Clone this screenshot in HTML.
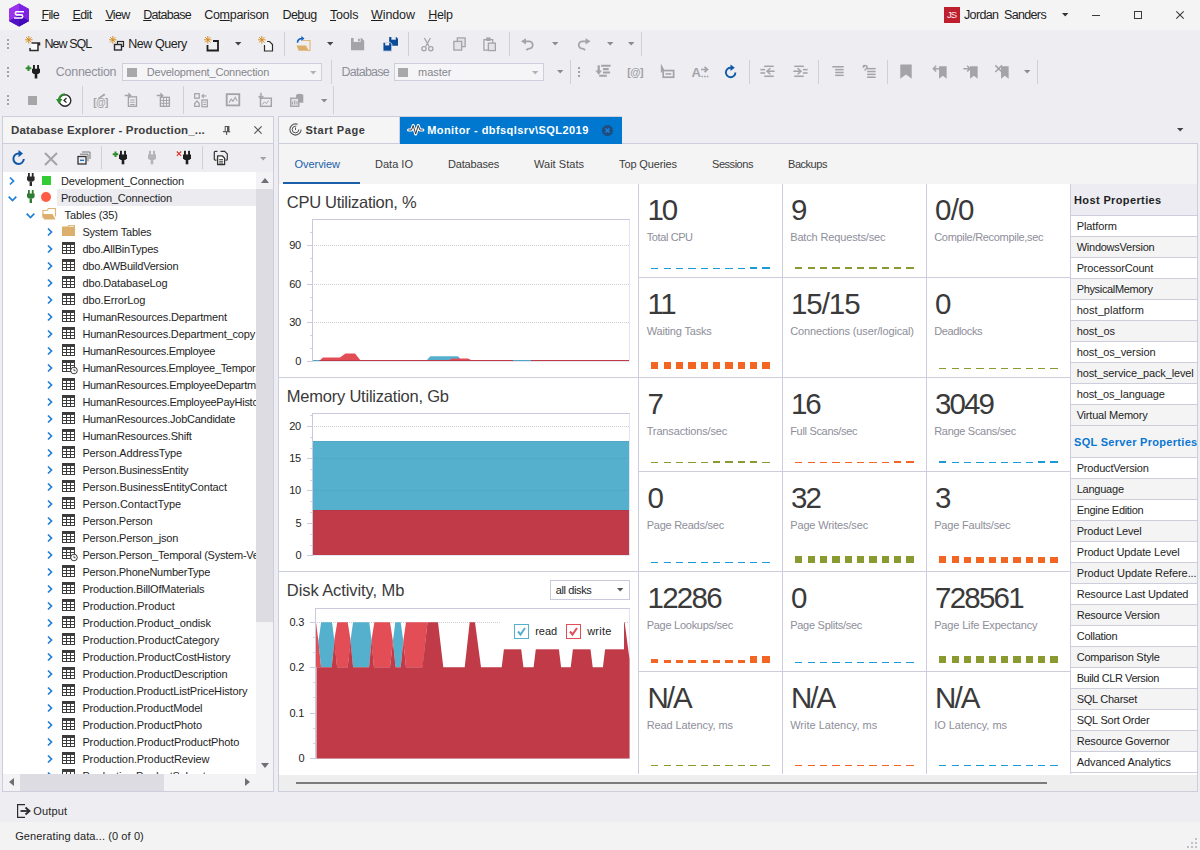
<!DOCTYPE html>
<html><head><meta charset="utf-8"><title>Monitor</title><style>*{box-sizing:border-box;margin:0;padding:0}
html,body{width:1200px;height:850px;overflow:hidden}
body{font-family:"Liberation Sans",sans-serif;font-size:12px;color:#1e1e1e;background:#eeeef2;position:relative}
.a{position:absolute}
.t{position:absolute;white-space:pre}
svg{overflow:visible}
u{text-decoration:underline;text-underline-offset:0.5px;text-decoration-thickness:1px}
</style></head><body>
<div class="a" style="left:0px;top:0px;width:1200px;height:30px;background:#f4f4f5;"></div>
<svg class="a" style="left:8px;top:3px" width="22" height="24" viewBox="0 0 22 24"><path d="M11 0.500L21 6v12L11 23.500 1 18V6z" fill="#7a1fe0"/><path d="M11 0.500L1 6v12l10-6z" fill="#9a33ee"/><path d="M11 0.500L21 6v12l-10-6z" fill="#7d22e2"/><path d="M1 18l10-6 10 6-10 5.500z" fill="#5210c4"/><path d="M11 12v11.500L21 18z" fill="#420bb8"/><path d="M16 8.800H8.600c-1.700 0-1.700 3.100 0 3.100h4.800c1.700 0 1.700 3.100 0 3.100H6" stroke="#fff" stroke-width="1.600" fill="none"/></svg>
<span class="t" style="left:41.4px;top:8px;font-size:12.5px;line-height:14px;height:14px;color:#1e1e1e;letter-spacing:-0.639px;"><u>F</u>ile</span>
<span class="t" style="left:72.4px;top:8px;font-size:12.5px;line-height:14px;height:14px;color:#1e1e1e;letter-spacing:-0.587px;"><u>E</u>dit</span>
<span class="t" style="left:105.4px;top:8px;font-size:12.5px;line-height:14px;height:14px;color:#1e1e1e;letter-spacing:-0.669px;"><u>V</u>iew</span>
<span class="t" style="left:143.2px;top:8px;font-size:12.5px;line-height:14px;height:14px;color:#1e1e1e;letter-spacing:-0.714px;"><u>D</u>atabase</span>
<span class="t" style="left:204.2px;top:8px;font-size:12.5px;line-height:14px;height:14px;color:#1e1e1e;letter-spacing:-0.279px;">Co<u>m</u>parison</span>
<span class="t" style="left:282.4px;top:8px;font-size:12.5px;line-height:14px;height:14px;color:#1e1e1e;letter-spacing:-0.509px;">De<u>b</u>ug</span>
<span class="t" style="left:330.0px;top:8px;font-size:12.5px;line-height:14px;height:14px;color:#1e1e1e;letter-spacing:-0.198px;"><u>T</u>ools</span>
<span class="t" style="left:371.0px;top:8px;font-size:12.5px;line-height:14px;height:14px;color:#1e1e1e;letter-spacing:-0.095px;"><u>W</u>indow</span>
<span class="t" style="left:428.2px;top:8px;font-size:12.5px;line-height:14px;height:14px;color:#1e1e1e;letter-spacing:-0.305px;"><u>H</u>elp</span>
<div class="a" style="left:944px;top:7px;width:16px;height:16px;background:#be1e2d;"></div>
<span class="t" style="left:947.0px;top:9px;font-size:9.5px;line-height:11px;height:11px;color:#fdeaea;letter-spacing:-0.897px;">JS</span>
<span class="t" style="left:964.0px;top:8px;font-size:12.5px;line-height:14px;height:14px;color:#1e1e1e;letter-spacing:-0.649px;">Jordan  Sanders</span>
<svg class="a" style="left:1062.3px;top:12.8px" width="6.4" height="3.4" viewBox="0 0 6.4 3.4"><path d="M0 0h6.400L3.200 3.400z" fill="#333"/></svg>
<div class="a" style="left:1092px;top:15px;width:8px;height:1px;background:#3a3a3a;"></div>
<div class="a" style="left:1134px;top:11px;width:8px;height:8px;border:1px solid #3a3a3a"></div>
<svg class="a" style="left:1176px;top:11px" width="8" height="8" viewBox="0 0 8 8"><path d="M0.300 0.300l7.400 7.400M7.700 0.300l-7.400 7.400" stroke="#3a3a3a" stroke-width="1.100"/></svg>
<div class="a" style="left:0px;top:30px;width:1200px;height:87px;background:#eeeef2;"></div>
<div class="a" style="left:7px;top:39px;width:2px;height:2px;background:#a2a2aa;"></div><div class="a" style="left:7px;top:43px;width:2px;height:2px;background:#a2a2aa;"></div><div class="a" style="left:7px;top:47px;width:2px;height:2px;background:#a2a2aa;"></div>
<svg class="a" style="left:25px;top:36px" width="16" height="16" viewBox="0 0 16 16"><g transform="translate(0,0)"><path d="M3.800 0v7.600M0 3.800h7.600M1.100 1.100l5.400 5.400M6.500 1.100L1.100 6.500" stroke="#d68a1e" stroke-width="0.95" fill="none"/></g><path d="M6 6.500h8.500v2.500h-1.500v5.500H5v-2.500h1.500z" fill="#fff"/><path d="M6.500 7h8v2.500M13 7v7.500H5v-2.500" stroke="#2b2b2b" stroke-width="1.500" fill="none"/></svg>
<span class="t" style="left:44.5px;top:37px;font-size:12.5px;line-height:14px;height:14px;color:#1e1e1e;letter-spacing:-0.957px;">New SQL</span>
<svg class="a" style="left:109px;top:36px" width="16" height="16" viewBox="0 0 16 16"><path d="M3.800 0v7.600M0 3.800h7.600M1.100 1.100l5.400 5.400M6.500 1.100L1.100 6.500" stroke="#d68a1e" stroke-width="0.95" fill="none"/><rect x="8.5" y="5.5" width="6" height="5" fill="none" stroke="#2b2b2b" stroke-width="1.2"/><rect x="5.5" y="8.5" width="7" height="5.5" fill="#eeeef2" stroke="#2b2b2b" stroke-width="1.4"/></svg>
<span class="t" style="left:128.3px;top:37px;font-size:12.5px;line-height:14px;height:14px;color:#1e1e1e;letter-spacing:-0.459px;">New Query</span>
<svg class="a" style="left:204px;top:36px" width="16" height="16" viewBox="0 0 16 16"><path d="M3.800 0v7.600M0 3.800h7.600M1.100 1.100l5.400 5.400M6.500 1.100L1.100 6.500" stroke="#d68a1e" stroke-width="0.95" fill="none"/><path d="M9 5h5v9.5H3.5V9" stroke="#1e1e1e" stroke-width="1.8" fill="none"/></svg>
<svg class="a" style="left:235.3px;top:41.9px" width="6.4" height="3.4" viewBox="0 0 6.4 3.4"><path d="M0 0h6.400L3.200 3.400z" fill="#444"/></svg>
<svg class="a" style="left:258px;top:36px" width="16" height="16" viewBox="0 0 16 16"><path d="M3.800 0v7.600M0 3.800h7.600M1.100 1.100l5.400 5.400M6.500 1.100L1.100 6.500" stroke="#d68a1e" stroke-width="0.95" fill="none"/><path d="M9 5.5h2.5l3 3v6.5H6.5V9" stroke="#2b2b2b" stroke-width="1.2" fill="#f8f8f8"/></svg>
<div class="a" style="left:284px;top:32px;width:1px;height:24px;background:#cfd0da;"></div>
<svg class="a" style="left:296px;top:36px" width="16" height="16" viewBox="0 0 16 16"><path d="M6.500 4.500h7.500v10h-3" stroke="#e3b877" stroke-width="1.200" fill="none"/><path d="M0.500 9.500h9.500l2.700 5.200H2.700z" fill="#dcae69"/><path d="M1.500 6.800c0-3.200 2-4.300 5-4.300" stroke="#1565c0" stroke-width="1.600" fill="none"/><path d="M5.300 0l3.200 2.500-3.200 2.500z" fill="#1565c0"/></svg>
<svg class="a" style="left:327.3px;top:41.9px" width="6.4" height="3.4" viewBox="0 0 6.4 3.4"><path d="M0 0h6.400L3.200 3.400z" fill="#444"/></svg>
<svg class="a" style="left:351px;top:38px" width="13.2" height="12.3" viewBox="0 0 15 14"><path d="M0 0h12l3 3v11H0z" fill="#a4a4a8"/><rect x="3" y="0" width="8" height="4.5" fill="#eeeef2"/><rect x="8" y="0.8" width="2" height="3" fill="#a4a4a8"/></svg>
<svg class="a" style="left:382.5px;top:36.7px" width="15" height="14.2" viewBox="0 0 17 16"><path d="M7 0h8l2 2v8H7z" fill="#0c4a9a"/><rect x="9.5" y="0" width="5" height="3" fill="#eeeef2"/><path d="M0 6h8l2 2v8H0z" fill="#0c4a9a" stroke="#eeeef2" stroke-width="1"/><rect x="2.5" y="6.5" width="4.5" height="3" fill="#eeeef2"/></svg>
<div class="a" style="left:408px;top:32px;width:1px;height:24px;background:#cfd0da;"></div>
<svg class="a" style="left:420.5px;top:37.5px" width="12.8" height="13.7" viewBox="0 0 15 16"><path d="M4 0l5.5 10M11 0L5.5 10" stroke="#a4a4a8" stroke-width="1.5" fill="none"/><circle cx="3.5" cy="12.5" r="2.5" fill="none" stroke="#a4a4a8" stroke-width="1.5"/><circle cx="11.5" cy="12.5" r="2.5" fill="none" stroke="#a4a4a8" stroke-width="1.5"/></svg>
<svg class="a" style="left:452.5px;top:37px" width="13" height="14" viewBox="0 0 15 16"><rect x="5" y="1" width="9" height="10" fill="#e4e4e8" stroke="#a4a4a8" stroke-width="1.5"/><rect x="1" y="5" width="9" height="10" fill="#e4e4e8" stroke="#a4a4a8" stroke-width="1.5"/></svg>
<svg class="a" style="left:483.2px;top:37px" width="13.3" height="14" viewBox="0 0 15 16"><rect x="1" y="3" width="10" height="12" fill="none" stroke="#a4a4a8" stroke-width="1.5"/><rect x="3.5" y="0.5" width="5" height="4" fill="#a4a4a8"/><rect x="6" y="7" width="8" height="8.5" fill="#e4e4e8" stroke="#a4a4a8" stroke-width="1.5"/></svg>
<div class="a" style="left:509px;top:32px;width:1px;height:24px;background:#cfd0da;"></div>
<svg class="a" style="left:521px;top:37.5px" width="13.5" height="13" viewBox="0 0 15 14"><path d="M3 3.5h6a4 4 0 0 1 0 8c-1.5 0-2 .5-3 2" stroke="#a4a4a8" stroke-width="2" fill="none"/><path d="M0 3.5L5.5 0v7z" fill="#a4a4a8"/></svg>
<svg class="a" style="left:552.3px;top:41.9px" width="6.4" height="3.4" viewBox="0 0 6.4 3.4"><path d="M0 0h6.400L3.200 3.400z" fill="#8a8a90"/></svg>
<svg class="a" style="left:576.5px;top:37.5px" width="13.5" height="13" viewBox="0 0 15 14"><path d="M12 3.5H6a4 4 0 0 0 0 8c1.5 0 2 .5 3 2" stroke="#a4a4a8" stroke-width="2" fill="none"/><path d="M15 3.5L9.5 0v7z" fill="#a4a4a8"/></svg>
<svg class="a" style="left:607.3px;top:41.9px" width="6.4" height="3.4" viewBox="0 0 6.4 3.4"><path d="M0 0h6.400L3.200 3.400z" fill="#8a8a90"/></svg>
<svg class="a" style="left:628.3px;top:41.9px" width="6.4" height="3.4" viewBox="0 0 6.4 3.4"><path d="M0 0h6.400L3.200 3.400z" fill="#8a8a90"/></svg>
<div class="a" style="left:641px;top:32px;width:1px;height:24px;background:#cfd0da;"></div>
<div class="a" style="left:7px;top:67px;width:2px;height:2px;background:#a2a2aa;"></div><div class="a" style="left:7px;top:71px;width:2px;height:2px;background:#a2a2aa;"></div><div class="a" style="left:7px;top:75px;width:2px;height:2px;background:#a2a2aa;"></div>
<svg class="a" style="left:25px;top:64px" width="16" height="16" viewBox="0 0 16 16"><path d="M3.500 1.500v5.600M0.700 4.300h5.600" stroke="#2e8b2e" stroke-width="2"/><g transform="translate(7,1) scale(1.0)"><rect x="1" y="0" width="1.9" height="4.2" fill="#1e1e1e"/><rect x="5.1" y="0" width="1.9" height="4.2" fill="#1e1e1e"/><path d="M0 3.800h8v3.600l-1.700 1.700h-4.600L0 7.400z" fill="#1e1e1e"/><rect x="2.700" y="8.800" width="2.600" height="4.700" fill="#1e1e1e"/></g></svg>
<span class="t" style="left:55.8px;top:65px;font-size:12.5px;line-height:14px;height:14px;color:#8e8e9a;letter-spacing:-0.275px;">Connection</span>
<div class="a" style="left:122px;top:63px;width:200px;height:18px;background:#f5f5f7;border:1px solid #cdcfdc"></div>
<div class="a" style="left:127px;top:68px;width:10px;height:9px;background:#a8a8a8;"></div>
<span class="t" style="left:146.7px;top:66px;font-size:11px;line-height:12px;height:12px;color:#86868c;letter-spacing:-0.186px;">Development_Connection</span>
<svg class="a" style="left:310.1px;top:70.6px" width="6.4" height="3.4" viewBox="0 0 6.4 3.4"><path d="M0 0h6.400L3.200 3.400z" fill="#b2b2b6"/></svg>
<div class="a" style="left:331px;top:60px;width:1px;height:24px;background:#cfd0da;"></div>
<span class="t" style="left:341.5px;top:65px;font-size:12.5px;line-height:14px;height:14px;color:#8e8e9a;letter-spacing:-0.752px;">Database</span>
<div class="a" style="left:394px;top:63px;width:150px;height:18px;background:#f5f5f7;border:1px solid #cdcfdc"></div>
<div class="a" style="left:398px;top:68px;width:10px;height:9px;background:#a8a8a8;"></div>
<span class="t" style="left:418.0px;top:66px;font-size:11px;line-height:12px;height:12px;color:#86868c;letter-spacing:-0.021px;">master</span>
<svg class="a" style="left:532.0999999999999px;top:70.6px" width="6.4" height="3.4" viewBox="0 0 6.4 3.4"><path d="M0 0h6.400L3.200 3.400z" fill="#b2b2b6"/></svg>
<svg class="a" style="left:557.3px;top:70.3px" width="6.4" height="3.4" viewBox="0 0 6.4 3.4"><path d="M0 0h6.400L3.200 3.400z" fill="#8a8a90"/></svg>
<div class="a" style="left:570px;top:60px;width:1px;height:24px;background:#cfd0da;"></div>
<div class="a" style="left:578px;top:67px;width:2px;height:2px;background:#a2a2aa;"></div><div class="a" style="left:578px;top:71px;width:2px;height:2px;background:#a2a2aa;"></div><div class="a" style="left:578px;top:75px;width:2px;height:2px;background:#a2a2aa;"></div>
<svg class="a" style="left:594.5px;top:64px" width="16" height="16" viewBox="0 0 16 16"><g transform="translate(8,8) scale(0.95) translate(-8,-8)"><path d="M6 1.5h10M8 5h6M8 8.500h7.500M4 12h8" stroke="#a4a4a8" stroke-width="2.200"/><path d="M3.500 1v7" stroke="#a4a4a8" stroke-width="2.400"/><path d="M0 6.500h7L3.500 11z" fill="#a4a4a8"/></g></svg>
<span class="t" style="left:627.3px;top:66px;font-size:10.5px;line-height:12px;height:12px;color:#a0a0a4;font-weight:700;letter-spacing:-0.578px;">[@]</span>
<svg class="a" style="left:658.5px;top:64px" width="16" height="16" viewBox="0 0 16 16"><g transform="translate(8,8) scale(0.95) translate(-8,-8)"><path d="M1.500 -1v10l2.800-2.500L7 9z" fill="#a4a4a8"/><rect x="4" y="6.500" width="11" height="7" fill="#eeeef2" stroke="#a4a4a8" stroke-width="1.800"/><path d="M6.500 10h6" stroke="#a4a4a8" stroke-width="1.600"/></g></svg>
<span class="t" style="left:691.5px;top:65px;font-size:13px;line-height:15px;height:15px;color:#a4a4a8;font-weight:700;letter-spacing:-0.791px;">A</span>
<svg class="a" style="left:700.5px;top:66px" width="8" height="12" viewBox="0 0 8 12"><path d="M0 3.500h5.500M3.500 0.800L6.500 3.500 3.500 6.200" stroke="#a4a4a8" stroke-width="1.700" fill="none"/><path d="M0.500 10.500h7" stroke="#a4a4a8" stroke-width="1.600" stroke-dasharray="1.600 1"/></svg>
<svg class="a" style="left:723px;top:64px" width="16" height="16" viewBox="0 0 16 16"><g transform="translate(8,8) scale(0.95) translate(-8,-8)"><path d="M12.6 8.5a5 5 0 1 1-4.6-5" stroke="#0f58a8" stroke-width="2" fill="none"/><path d="M7.5 0l4.5 3.5-4.5 3.5z" fill="#0f58a8"/></g></svg>
<div class="a" style="left:749px;top:60px;width:1px;height:24px;background:#cfd0da;"></div>
<svg class="a" style="left:760px;top:64px" width="16" height="16" viewBox="0 0 16 16"><g transform="translate(8,8) scale(0.95) translate(-8,-8)"><path d="M4 2H14" stroke="#a4a4a8" stroke-width="1.6"/><path d="M4 12.5H14" stroke="#a4a4a8" stroke-width="1.6"/><path d="M0 5.5H5" stroke="#a4a4a8" stroke-width="1.6"/><path d="M0 9H5" stroke="#a4a4a8" stroke-width="1.6"/><path d="M15 7.2H8" stroke="#a4a4a8" stroke-width="1.6"/><path d="M10.5 4L7 7.2l3.5 3.2" stroke="#a4a4a8" stroke-width="1.6" fill="none"/></g></svg>
<svg class="a" style="left:791.5px;top:64px" width="16" height="16" viewBox="0 0 16 16"><g transform="translate(8,8) scale(0.95) translate(-8,-8)"><path d="M2 2H12" stroke="#a4a4a8" stroke-width="1.6"/><path d="M2 12.5H12" stroke="#a4a4a8" stroke-width="1.6"/><path d="M11 5.5H16" stroke="#a4a4a8" stroke-width="1.6"/><path d="M11 9H16" stroke="#a4a4a8" stroke-width="1.6"/><path d="M1 7.2h7" stroke="#a4a4a8" stroke-width="1.6"/><path d="M5.5 4L9 7.2 5.5 10.4" stroke="#a4a4a8" stroke-width="1.6" fill="none"/></g></svg>
<div class="a" style="left:818px;top:60px;width:1px;height:24px;background:#cfd0da;"></div>
<svg class="a" style="left:829.5px;top:64px" width="16" height="16" viewBox="0 0 16 16"><g transform="translate(8,8) scale(0.95) translate(-8,-8)"><path d="M5 2.5H14" stroke="#a4a4a8" stroke-width="1.6"/><path d="M5 5.5H14" stroke="#a4a4a8" stroke-width="1.6"/><path d="M5 8.5H14" stroke="#a4a4a8" stroke-width="1.6"/><path d="M5 11.5H14" stroke="#a4a4a8" stroke-width="1.6"/><path d="M2 2.5h3" stroke="#a4a4a8" stroke-width="1.6"/></g></svg>
<svg class="a" style="left:860.5px;top:64px" width="16" height="16" viewBox="0 0 16 16"><g transform="translate(8,8) scale(0.95) translate(-8,-8)"><path d="M6 4.5H15" stroke="#a4a4a8" stroke-width="1.6"/><path d="M6 7.5H15" stroke="#a4a4a8" stroke-width="1.6"/><path d="M6 10.5H15" stroke="#a4a4a8" stroke-width="1.6"/><path d="M6 13.5H15" stroke="#a4a4a8" stroke-width="1.6"/><path d="M2 3.5c0-3 4-3 4-.5 0 1.5-2 2-2.5 3.5" stroke="#a4a4a8" stroke-width="1.6" fill="none"/><path d="M1 1l3 0-1 2z" fill="#a4a4a8"/></g></svg>
<div class="a" style="left:887px;top:60px;width:1px;height:24px;background:#cfd0da;"></div>
<svg class="a" style="left:897.5px;top:64px" width="16" height="16" viewBox="0 0 16 16"><g transform="translate(8,8) scale(0.95) translate(-8,-8)"><path d="M2 0h12v15l-6-4.5L2 15z" fill="#a4a4a8"/></g></svg>
<svg class="a" style="left:931.5px;top:64px" width="16" height="16" viewBox="0 0 16 16"><g transform="translate(8,8) scale(0.95) translate(-8,-8)"><path d="M7 2h8v13l-4-3-4 3z" fill="#a4a4a8"/><path d="M8 4.5H1M4 1.5L1 4.5l3 3" stroke="#a4a4a8" stroke-width="1.6" fill="none"/></g></svg>
<svg class="a" style="left:962.5px;top:64px" width="16" height="16" viewBox="0 0 16 16"><g transform="translate(8,8) scale(0.95) translate(-8,-8)"><path d="M7 2h8v13l-4-3-4 3z" fill="#a4a4a8"/><path d="M0 4.5h7M4 1.5l3 3-3 3" stroke="#a4a4a8" stroke-width="1.6" fill="none"/></g></svg>
<svg class="a" style="left:994px;top:64px" width="16" height="16" viewBox="0 0 16 16"><g transform="translate(8,8) scale(0.95) translate(-8,-8)"><path d="M7 2h8v13l-4-3-4 3z" fill="#a4a4a8"/><path d="M1 1l7 7M8 1L1 8" stroke="#a4a4a8" stroke-width="1.6" fill="none"/></g></svg>
<svg class="a" style="left:1024.3px;top:70.3px" width="6.4" height="3.4" viewBox="0 0 6.4 3.4"><path d="M0 0h6.400L3.200 3.400z" fill="#8a8a90"/></svg>
<div class="a" style="left:1037px;top:60px;width:1px;height:24px;background:#cfd0da;"></div>
<div class="a" style="left:7px;top:95px;width:2px;height:2px;background:#a2a2aa;"></div><div class="a" style="left:7px;top:99px;width:2px;height:2px;background:#a2a2aa;"></div><div class="a" style="left:7px;top:103px;width:2px;height:2px;background:#a2a2aa;"></div>
<div class="a" style="left:28px;top:96px;width:9px;height:9px;background:#a6a6a8;"></div>
<svg class="a" style="left:56px;top:92px" width="16" height="16" viewBox="0 0 16 16"><circle cx="9" cy="8.5" r="5.8" fill="#fff" stroke="#2a2a2a" stroke-width="1.4"/><path d="M10.5 6L8 8.5l2.5 2" stroke="#2a2a2a" stroke-width="1.3" fill="none"/><path d="M3 8.5A6 6 0 0 1 9 2.2" stroke="#2e8b2e" stroke-width="2" fill="none"/><path d="M0 7h6.5L3 12z" fill="#2e8b2e"/></svg>
<div class="a" style="left:82px;top:86px;width:1px;height:28px;background:#cfd0da;"></div>
<span class="t" style="left:93.3px;top:97px;font-size:10px;line-height:11px;height:11px;color:#a4a4a8;font-weight:700;letter-spacing:-0.641px;">[@]</span>
<svg class="a" style="left:97px;top:92.5px" width="9" height="6" viewBox="0 0 9 6"><path d="M0.500 5.500L7 0.500l1.500 1.500L2 6z" fill="#a4a4a8"/></svg>
<svg class="a" style="left:124px;top:92px" width="16" height="16" viewBox="0 0 16 16"><g transform="translate(8,8) scale(0.9) translate(-8,-8)"><rect x="4" y="4.5" width="9" height="10.5" fill="none" stroke="#a4a4a8" stroke-width="1.5"/><path d="M6 8H11" stroke="#a4a4a8" stroke-width="1.1"/><path d="M6 10.5H11" stroke="#a4a4a8" stroke-width="1.1"/><path d="M6 13H11" stroke="#a4a4a8" stroke-width="1.1"/><path d="M0 3h6M4 0.5L6.5 3 4 5.5" stroke="#a4a4a8" stroke-width="1.6" fill="none"/></g></svg>
<svg class="a" style="left:156px;top:92px" width="16" height="16" viewBox="0 0 16 16"><g transform="translate(8,8) scale(0.9) translate(-8,-8)"><rect x="4" y="5" width="10" height="10" fill="none" stroke="#a4a4a8" stroke-width="1.5"/><path d="M4 8.5h10M4 11.7h10M7.5 5v10M10.8 5v10" stroke="#a4a4a8" stroke-width="1.1"/><path d="M0 3h6M4 0.5L6.5 3 4 5.5" stroke="#a4a4a8" stroke-width="1.6" fill="none"/></g></svg>
<div class="a" style="left:183px;top:86px;width:1px;height:28px;background:#cfd0da;"></div>
<svg class="a" style="left:193px;top:92px" width="16" height="16" viewBox="0 0 16 16"><g transform="translate(8,8) scale(0.9) translate(-8,-8)"><rect x="1" y="1" width="5" height="5" fill="none" stroke="#a4a4a8" stroke-width="1.4"/><path d="M9 3.5h5" stroke="#a4a4a8" stroke-width="1.4"/><path d="M11 1.5l-2 2 2 2" stroke="#a4a4a8" stroke-width="1.2" fill="none"/><path d="M1 15v-3l2.5-3 2.5 3v3z" fill="none" stroke="#a4a4a8" stroke-width="1.4"/><rect x="9" y="8" width="6" height="7.5" fill="none" stroke="#a4a4a8" stroke-width="1.4"/><path d="M10.5 10.5h3M10.5 13h3" stroke="#a4a4a8" stroke-width="1.1"/></g></svg>
<svg class="a" style="left:225px;top:92px" width="16" height="16" viewBox="0 0 16 16"><g transform="translate(8,8) scale(0.9) translate(-8,-8)"><rect x="1" y="1.5" width="14" height="12.5" fill="none" stroke="#a4a4a8" stroke-width="2"/><path d="M3.5 11l2.5-4 2 2.5 2.5-4.5 2 4" stroke="#a4a4a8" stroke-width="1.2" fill="none"/></g></svg>
<svg class="a" style="left:257px;top:92px" width="16" height="16" viewBox="0 0 16 16"><g transform="translate(8,8) scale(0.9) translate(-8,-8)"><rect x="3" y="6" width="12" height="9" fill="none" stroke="#a4a4a8" stroke-width="1.6"/><path d="M5 13l2.5-3 2 2 2.5-3.5" stroke="#a4a4a8" stroke-width="1.1" fill="none"/><path d="M3.5 0v6M1 3.5l2.5 3 2.5-3" stroke="#a4a4a8" stroke-width="1.6" fill="none"/></g></svg>
<svg class="a" style="left:289px;top:92px" width="16" height="16" viewBox="0 0 16 16"><g transform="translate(8,8) scale(0.9) translate(-8,-8)"><ellipse cx="11" cy="3" rx="4" ry="2" fill="#a4a4a8"/><path d="M7 3v8h8V3" fill="#a4a4a8"/><rect x="1" y="6" width="9" height="9" fill="#e2e2e6" stroke="#a4a4a8" stroke-width="1.5"/><path d="M3 13V10M5.5 13V8.5M8 13v-3.5" stroke="#a4a4a8" stroke-width="1.2"/></g></svg>
<svg class="a" style="left:320.8px;top:98.7px" width="6.4" height="3.4" viewBox="0 0 6.4 3.4"><path d="M0 0h6.400L3.200 3.400z" fill="#8a8a90"/></svg>
<div class="a" style="left:333px;top:86px;width:1px;height:28px;background:#cfd0da;"></div>
<div class="a" style="left:2px;top:116px;width:272px;height:676px;background:#fff;border:1px solid #cccedb"></div>
<div class="a" style="left:3px;top:117px;width:270px;height:26px;background:#f5f5f5;"></div>
<div class="a" style="left:3px;top:143px;width:270px;height:1px;background:#cccedb;"></div>
<span class="t" style="left:11.0px;top:124px;font-size:11.5px;line-height:12px;height:12px;color:#3d3d3d;font-weight:700;letter-spacing:0.180px;">Database Explorer - Production_...</span>
<svg class="a" style="left:223px;top:126px" width="8" height="9" viewBox="0 0 8 9"><path d="M1.8 0.5h4.4M2.2 0.5v5M5.8 0.5v5" stroke="#555" stroke-width="1" fill="none"/><rect x="4" y="0.5" width="2.2" height="5" fill="#555"/><path d="M0 5.7h7.2" stroke="#555" stroke-width="1.2"/><path d="M3.6 6v3" stroke="#555" stroke-width="1.1"/></svg>
<svg class="a" style="left:254px;top:126px" width="8" height="8" viewBox="0 0 8 8"><path d="M0.4 0.4l7.2 7.2M7.600 0.4L0.4 7.6" stroke="#555" stroke-width="1.2"/></svg>
<div class="a" style="left:3px;top:144px;width:270px;height:28px;background:#eeeef2;"></div>
<svg class="a" style="left:11px;top:150px" width="16" height="16" viewBox="0 0 16 16"><path d="M12.8 9a5.2 5.2 0 1 1-4.8-5.4" stroke="#0f58a8" stroke-width="2" fill="none"/><path d="M7.5 0l4.5 3.6-4.5 3.6z" fill="#0f58a8"/></svg>
<svg class="a" style="left:44px;top:151.5px" width="14" height="14" viewBox="0 0 14 14"><path d="M1 1l12 12M13 1L1 13" stroke="#a4a4a8" stroke-width="2"/></svg>
<svg class="a" style="left:77px;top:151px" width="14" height="14" viewBox="0 0 14 14"><path d="M5 1h8v7M3 3.2h8v7" stroke="#666" stroke-width="0.9" fill="none"/><rect x="1" y="5.5" width="8" height="7.5" fill="#eeeef2" stroke="#333" stroke-width="1.3"/><path d="M3 9.3h4" stroke="#1e6fc4" stroke-width="1.4"/></svg>
<div class="a" style="left:101px;top:146px;width:1px;height:23px;background:#cfd0da;"></div>
<svg class="a" style="left:112px;top:150px" width="16" height="16" viewBox="0 0 16 16"><path d="M3.5 1.5v5.6M0.7 4.3h5.6" stroke="#2e8b2e" stroke-width="2"/><g transform="translate(7,0.8) scale(1.0)"><rect x="1" y="0" width="1.9" height="4.2" fill="#1e1e1e"/><rect x="5.1" y="0" width="1.9" height="4.2" fill="#1e1e1e"/><path d="M0 3.8h8v3.6l-1.7 1.7h-4.6L0 7.4z" fill="#1e1e1e"/><rect x="2.7" y="8.8" width="2.6" height="4.7" fill="#1e1e1e"/></g></svg>
<svg class="a" style="left:144px;top:150px" width="16" height="16" viewBox="0 0 16 16"><g transform="translate(4,0.8) scale(1.0)"><rect x="1" y="0" width="1.9" height="4.2" fill="#b4b4b8"/><rect x="5.1" y="0" width="1.9" height="4.2" fill="#b4b4b8"/><path d="M0 3.8h8v3.6l-1.7 1.7h-4.6L0 7.4z" fill="#b4b4b8"/><rect x="2.7" y="8.8" width="2.6" height="4.7" fill="#b4b4b8"/></g></svg>
<svg class="a" style="left:176px;top:150px" width="16" height="16" viewBox="0 0 16 16"><path d="M0.8 1.5l4.4 4.4M5.2 1.5L0.8 5.9" stroke="#d43a2f" stroke-width="1.2"/><g transform="translate(7,0.8) scale(1.0)"><rect x="1" y="0" width="1.9" height="4.2" fill="#1e1e1e"/><rect x="5.1" y="0" width="1.9" height="4.2" fill="#1e1e1e"/><path d="M0 3.8h8v3.6l-1.7 1.7h-4.6L0 7.4z" fill="#1e1e1e"/><rect x="2.7" y="8.8" width="2.6" height="4.7" fill="#1e1e1e"/></g></svg>
<div class="a" style="left:202px;top:146px;width:1px;height:23px;background:#cfd0da;"></div>
<svg class="a" style="left:213px;top:150px" width="16" height="16" viewBox="0 0 16 16"><path d="M3.5 10.2H2.3c-.6 0-1-.4-1-1V2.3c0-.6.4-1 1-1H4.5M7.5 1.3h4.200l2.600 2.600v5.300c0 .6-.4 1-1 1h-.8" stroke="#333" stroke-width="1.2" fill="none"/><path d="M4.6 5.800h4.600l2.400 2.400v6.300H4.600z" fill="#fff" stroke="#333" stroke-width="1.3" stroke-linejoin="round"/><path d="M6.200 9.600h3.800M6.200 11.300h3.800M6.200 13h3.800" stroke="#333" stroke-width="0.9"/></svg>
<svg class="a" style="left:259.8px;top:156.8px" width="6.4" height="3.4" viewBox="0 0 6.4 3.4"><path d="M0 0h6.400L3.200 3.400z" fill="#a0a0a6"/></svg>
<div class="a" style="left:3px;top:172px;width:253px;height:602px;background:#fff;"></div>
<div class="a" style="left:57px;top:189px;width:199px;height:17px;background:#ebebf0;"></div>
<div class="a" style="left:3px;top:172px;width:253px;height:602px;overflow:hidden"><svg class="a" style="left:5.5px;top:5px" width="6" height="8" viewBox="0 0 6 8"><path d="M1 0.5L4.5 4 1 7.5" stroke="#1e7fd8" stroke-width="1.7" fill="none"/></svg><svg class="a" style="left:23.5px;top:1.4000000000000004px" width="8" height="13" viewBox="0 0 8 13"><rect x="1" y="0" width="1.8" height="4" fill="#2a2a2a"/><rect x="4.8" y="0" width="1.8" height="4" fill="#2a2a2a"/><path d="M0 3.6h7.6v3.4l-1.6 1.600h-4.400L0 7z" fill="#2a2a2a"/><rect x="2.6" y="8.4" width="2.4" height="4.6" fill="#2a2a2a"/></svg><div class="a" style="left:39px;top:4px;width:9px;height:9px;background:#33cc33;"></div><span class="t" style="left:57.9px;top:3px;font-size:11px;line-height:12px;height:12px;color:#1e1e1e;letter-spacing:-0.163px;">Development_Connection</span><svg class="a" style="left:4.5px;top:23.5px" width="9" height="6" viewBox="0 0 9 6"><path d="M0.7 0.700L4.5 4.5 8.3 0.7" stroke="#1e7fd8" stroke-width="1.7" fill="none"/></svg><svg class="a" style="left:23.5px;top:18.4px" width="8" height="13" viewBox="0 0 8 13"><rect x="1" y="0" width="1.8" height="4" fill="#2e7d32"/><rect x="4.8" y="0" width="1.8" height="4" fill="#2e7d32"/><path d="M0 3.6h7.6v3.4l-1.6 1.600h-4.400L0 7z" fill="#2e7d32"/><rect x="2.6" y="8.4" width="2.4" height="4.6" fill="#2e7d32"/></svg><div class="a" style="left:38.1px;top:19.8px;width:10.4px;height:10.4px;background:#ff5c45;border-radius:50%"></div><span class="t" style="left:57.9px;top:20px;font-size:11px;line-height:12px;height:12px;color:#1e1e1e;letter-spacing:-0.160px;">Production_Connection</span><svg class="a" style="left:23px;top:40.5px" width="9" height="6" viewBox="0 0 9 6"><path d="M0.7 0.700L4.5 4.5 8.3 0.7" stroke="#1e7fd8" stroke-width="1.7" fill="none"/></svg><svg class="a" style="left:39px;top:36px" width="15" height="12" viewBox="0 0 15 12"><path d="M1 10V2.500h4l1.5-2h7v8" stroke="#e0b475" stroke-width="1.2" fill="#fff"/><path d="M0 6h10.500l3 5.500H2z" fill="#dcb06c"/></svg><span class="t" style="left:61.6px;top:37px;font-size:11px;line-height:12px;height:12px;color:#1e1e1e;letter-spacing:-0.102px;">Tables (35)</span><svg class="a" style="left:43.5px;top:56px" width="6" height="8" viewBox="0 0 6 8"><path d="M1 0.5L4.5 4 1 7.5" stroke="#1e7fd8" stroke-width="1.7" fill="none"/></svg><svg class="a" style="left:59px;top:53px" width="13" height="11" viewBox="0 0 13 11"><path d="M0 1.500h5.500l1-1.500H13v11H0z" fill="#dcb06c"/><path d="M6.8 1.300h5.2" stroke="#fff" stroke-width="0.8"/></svg><span class="t" style="left:79.4px;top:54px;font-size:11px;line-height:12px;height:12px;color:#1e1e1e;letter-spacing:-0.179px;">System Tables</span><svg class="a" style="left:43.5px;top:73px" width="6" height="8" viewBox="0 0 6 8"><path d="M1 0.5L4.5 4 1 7.5" stroke="#1e7fd8" stroke-width="1.7" fill="none"/></svg><svg class="a" style="left:59px;top:70px" width="13" height="12" viewBox="0 0 13 12"><rect x="0" y="0" width="13" height="12" fill="#3c3c3c"/><rect x="1" y="3" width="3" height="2" fill="#fff"/><rect x="1" y="6" width="3" height="2" fill="#fff"/><rect x="1" y="9" width="3" height="2" fill="#fff"/><rect x="5" y="3" width="3" height="2" fill="#fff"/><rect x="5" y="6" width="3" height="2" fill="#fff"/><rect x="5" y="9" width="3" height="2" fill="#fff"/><rect x="9" y="3" width="3" height="2" fill="#fff"/><rect x="9" y="6" width="3" height="2" fill="#fff"/><rect x="9" y="9" width="3" height="2" fill="#fff"/></svg><span class="t" style="left:79.4px;top:71px;font-size:11px;line-height:12px;height:12px;color:#1e1e1e;letter-spacing:-0.193px;">dbo.AllBinTypes</span><svg class="a" style="left:43.5px;top:90px" width="6" height="8" viewBox="0 0 6 8"><path d="M1 0.5L4.5 4 1 7.5" stroke="#1e7fd8" stroke-width="1.7" fill="none"/></svg><svg class="a" style="left:59px;top:87px" width="13" height="12" viewBox="0 0 13 12"><rect x="0" y="0" width="13" height="12" fill="#3c3c3c"/><rect x="1" y="3" width="3" height="2" fill="#fff"/><rect x="1" y="6" width="3" height="2" fill="#fff"/><rect x="1" y="9" width="3" height="2" fill="#fff"/><rect x="5" y="3" width="3" height="2" fill="#fff"/><rect x="5" y="6" width="3" height="2" fill="#fff"/><rect x="5" y="9" width="3" height="2" fill="#fff"/><rect x="9" y="3" width="3" height="2" fill="#fff"/><rect x="9" y="6" width="3" height="2" fill="#fff"/><rect x="9" y="9" width="3" height="2" fill="#fff"/></svg><span class="t" style="left:79.4px;top:88px;font-size:11px;line-height:12px;height:12px;color:#1e1e1e;letter-spacing:-0.215px;">dbo.AWBuildVersion</span><svg class="a" style="left:43.5px;top:107px" width="6" height="8" viewBox="0 0 6 8"><path d="M1 0.5L4.5 4 1 7.5" stroke="#1e7fd8" stroke-width="1.7" fill="none"/></svg><svg class="a" style="left:59px;top:104px" width="13" height="12" viewBox="0 0 13 12"><rect x="0" y="0" width="13" height="12" fill="#3c3c3c"/><rect x="1" y="3" width="3" height="2" fill="#fff"/><rect x="1" y="6" width="3" height="2" fill="#fff"/><rect x="1" y="9" width="3" height="2" fill="#fff"/><rect x="5" y="3" width="3" height="2" fill="#fff"/><rect x="5" y="6" width="3" height="2" fill="#fff"/><rect x="5" y="9" width="3" height="2" fill="#fff"/><rect x="9" y="3" width="3" height="2" fill="#fff"/><rect x="9" y="6" width="3" height="2" fill="#fff"/><rect x="9" y="9" width="3" height="2" fill="#fff"/></svg><span class="t" style="left:79.4px;top:105px;font-size:11px;line-height:12px;height:12px;color:#1e1e1e;letter-spacing:-0.124px;">dbo.DatabaseLog</span><svg class="a" style="left:43.5px;top:124px" width="6" height="8" viewBox="0 0 6 8"><path d="M1 0.5L4.5 4 1 7.5" stroke="#1e7fd8" stroke-width="1.7" fill="none"/></svg><svg class="a" style="left:59px;top:121px" width="13" height="12" viewBox="0 0 13 12"><rect x="0" y="0" width="13" height="12" fill="#3c3c3c"/><rect x="1" y="3" width="3" height="2" fill="#fff"/><rect x="1" y="6" width="3" height="2" fill="#fff"/><rect x="1" y="9" width="3" height="2" fill="#fff"/><rect x="5" y="3" width="3" height="2" fill="#fff"/><rect x="5" y="6" width="3" height="2" fill="#fff"/><rect x="5" y="9" width="3" height="2" fill="#fff"/><rect x="9" y="3" width="3" height="2" fill="#fff"/><rect x="9" y="6" width="3" height="2" fill="#fff"/><rect x="9" y="9" width="3" height="2" fill="#fff"/></svg><span class="t" style="left:79.4px;top:122px;font-size:11px;line-height:12px;height:12px;color:#1e1e1e;letter-spacing:-0.102px;">dbo.ErrorLog</span><svg class="a" style="left:43.5px;top:141px" width="6" height="8" viewBox="0 0 6 8"><path d="M1 0.5L4.5 4 1 7.5" stroke="#1e7fd8" stroke-width="1.7" fill="none"/></svg><svg class="a" style="left:59px;top:138px" width="13" height="12" viewBox="0 0 13 12"><rect x="0" y="0" width="13" height="12" fill="#3c3c3c"/><rect x="1" y="3" width="3" height="2" fill="#fff"/><rect x="1" y="6" width="3" height="2" fill="#fff"/><rect x="1" y="9" width="3" height="2" fill="#fff"/><rect x="5" y="3" width="3" height="2" fill="#fff"/><rect x="5" y="6" width="3" height="2" fill="#fff"/><rect x="5" y="9" width="3" height="2" fill="#fff"/><rect x="9" y="3" width="3" height="2" fill="#fff"/><rect x="9" y="6" width="3" height="2" fill="#fff"/><rect x="9" y="9" width="3" height="2" fill="#fff"/></svg><span class="t" style="left:79.4px;top:139px;font-size:11px;line-height:12px;height:12px;color:#1e1e1e;letter-spacing:-0.163px;">HumanResources.Department</span><svg class="a" style="left:43.5px;top:158px" width="6" height="8" viewBox="0 0 6 8"><path d="M1 0.5L4.5 4 1 7.5" stroke="#1e7fd8" stroke-width="1.7" fill="none"/></svg><svg class="a" style="left:59px;top:155px" width="13" height="12" viewBox="0 0 13 12"><rect x="0" y="0" width="13" height="12" fill="#3c3c3c"/><rect x="1" y="3" width="3" height="2" fill="#fff"/><rect x="1" y="6" width="3" height="2" fill="#fff"/><rect x="1" y="9" width="3" height="2" fill="#fff"/><rect x="5" y="3" width="3" height="2" fill="#fff"/><rect x="5" y="6" width="3" height="2" fill="#fff"/><rect x="5" y="9" width="3" height="2" fill="#fff"/><rect x="9" y="3" width="3" height="2" fill="#fff"/><rect x="9" y="6" width="3" height="2" fill="#fff"/><rect x="9" y="9" width="3" height="2" fill="#fff"/></svg><span class="t" style="left:79.4px;top:156px;font-size:11px;line-height:12px;height:12px;color:#1e1e1e;letter-spacing:-0.174px;">HumanResources.Department_copy</span><svg class="a" style="left:43.5px;top:175px" width="6" height="8" viewBox="0 0 6 8"><path d="M1 0.5L4.5 4 1 7.5" stroke="#1e7fd8" stroke-width="1.7" fill="none"/></svg><svg class="a" style="left:59px;top:172px" width="13" height="12" viewBox="0 0 13 12"><rect x="0" y="0" width="13" height="12" fill="#3c3c3c"/><rect x="1" y="3" width="3" height="2" fill="#fff"/><rect x="1" y="6" width="3" height="2" fill="#fff"/><rect x="1" y="9" width="3" height="2" fill="#fff"/><rect x="5" y="3" width="3" height="2" fill="#fff"/><rect x="5" y="6" width="3" height="2" fill="#fff"/><rect x="5" y="9" width="3" height="2" fill="#fff"/><rect x="9" y="3" width="3" height="2" fill="#fff"/><rect x="9" y="6" width="3" height="2" fill="#fff"/><rect x="9" y="9" width="3" height="2" fill="#fff"/></svg><span class="t" style="left:79.4px;top:173px;font-size:11px;line-height:12px;height:12px;color:#1e1e1e;letter-spacing:-0.322px;">HumanResources.Employee</span><svg class="a" style="left:43.5px;top:192px" width="6" height="8" viewBox="0 0 6 8"><path d="M1 0.5L4.5 4 1 7.5" stroke="#1e7fd8" stroke-width="1.7" fill="none"/></svg><svg class="a" style="left:58.5px;top:188px" width="16" height="14" viewBox="0 0 16 14"><rect x="0" y="0" width="13" height="12" fill="#3c3c3c"/><rect x="1" y="3" width="3" height="2" fill="#fff"/><rect x="1" y="6" width="3" height="2" fill="#fff"/><rect x="1" y="9" width="3" height="2" fill="#fff"/><rect x="5" y="3" width="3" height="2" fill="#fff"/><rect x="5" y="6" width="3" height="2" fill="#fff"/><rect x="5" y="9" width="3" height="2" fill="#fff"/><rect x="9" y="3" width="3" height="2" fill="#fff"/><rect x="9" y="6" width="3" height="2" fill="#fff"/><rect x="9" y="9" width="3" height="2" fill="#fff"/><circle cx="12" cy="10.5" r="3.3" fill="#fff" stroke="#3c3c3c" stroke-width="1"/><path d="M12 8.800v1.900h1.5" stroke="#3c3c3c" stroke-width="0.9" fill="none"/></svg><span class="t" style="left:79.4px;top:190px;font-size:11px;line-height:12px;height:12px;color:#1e1e1e;letter-spacing:-0.327px;">HumanResources.Employee_Temporal</span><svg class="a" style="left:43.5px;top:209px" width="6" height="8" viewBox="0 0 6 8"><path d="M1 0.5L4.5 4 1 7.5" stroke="#1e7fd8" stroke-width="1.7" fill="none"/></svg><svg class="a" style="left:59px;top:206px" width="13" height="12" viewBox="0 0 13 12"><rect x="0" y="0" width="13" height="12" fill="#3c3c3c"/><rect x="1" y="3" width="3" height="2" fill="#fff"/><rect x="1" y="6" width="3" height="2" fill="#fff"/><rect x="1" y="9" width="3" height="2" fill="#fff"/><rect x="5" y="3" width="3" height="2" fill="#fff"/><rect x="5" y="6" width="3" height="2" fill="#fff"/><rect x="5" y="9" width="3" height="2" fill="#fff"/><rect x="9" y="3" width="3" height="2" fill="#fff"/><rect x="9" y="6" width="3" height="2" fill="#fff"/><rect x="9" y="9" width="3" height="2" fill="#fff"/></svg><span class="t" style="left:79.4px;top:207px;font-size:11px;line-height:12px;height:12px;color:#1e1e1e;letter-spacing:-0.290px;">HumanResources.EmployeeDepartmentHistory</span><svg class="a" style="left:43.5px;top:226px" width="6" height="8" viewBox="0 0 6 8"><path d="M1 0.5L4.5 4 1 7.5" stroke="#1e7fd8" stroke-width="1.7" fill="none"/></svg><svg class="a" style="left:59px;top:223px" width="13" height="12" viewBox="0 0 13 12"><rect x="0" y="0" width="13" height="12" fill="#3c3c3c"/><rect x="1" y="3" width="3" height="2" fill="#fff"/><rect x="1" y="6" width="3" height="2" fill="#fff"/><rect x="1" y="9" width="3" height="2" fill="#fff"/><rect x="5" y="3" width="3" height="2" fill="#fff"/><rect x="5" y="6" width="3" height="2" fill="#fff"/><rect x="5" y="9" width="3" height="2" fill="#fff"/><rect x="9" y="3" width="3" height="2" fill="#fff"/><rect x="9" y="6" width="3" height="2" fill="#fff"/><rect x="9" y="9" width="3" height="2" fill="#fff"/></svg><span class="t" style="left:79.4px;top:224px;font-size:11px;line-height:12px;height:12px;color:#1e1e1e;letter-spacing:-0.263px;">HumanResources.EmployeePayHistory</span><svg class="a" style="left:43.5px;top:243px" width="6" height="8" viewBox="0 0 6 8"><path d="M1 0.5L4.5 4 1 7.5" stroke="#1e7fd8" stroke-width="1.7" fill="none"/></svg><svg class="a" style="left:59px;top:240px" width="13" height="12" viewBox="0 0 13 12"><rect x="0" y="0" width="13" height="12" fill="#3c3c3c"/><rect x="1" y="3" width="3" height="2" fill="#fff"/><rect x="1" y="6" width="3" height="2" fill="#fff"/><rect x="1" y="9" width="3" height="2" fill="#fff"/><rect x="5" y="3" width="3" height="2" fill="#fff"/><rect x="5" y="6" width="3" height="2" fill="#fff"/><rect x="5" y="9" width="3" height="2" fill="#fff"/><rect x="9" y="3" width="3" height="2" fill="#fff"/><rect x="9" y="6" width="3" height="2" fill="#fff"/><rect x="9" y="9" width="3" height="2" fill="#fff"/></svg><span class="t" style="left:79.4px;top:241px;font-size:11px;line-height:12px;height:12px;color:#1e1e1e;letter-spacing:-0.233px;">HumanResources.JobCandidate</span><svg class="a" style="left:43.5px;top:260px" width="6" height="8" viewBox="0 0 6 8"><path d="M1 0.5L4.5 4 1 7.5" stroke="#1e7fd8" stroke-width="1.7" fill="none"/></svg><svg class="a" style="left:59px;top:257px" width="13" height="12" viewBox="0 0 13 12"><rect x="0" y="0" width="13" height="12" fill="#3c3c3c"/><rect x="1" y="3" width="3" height="2" fill="#fff"/><rect x="1" y="6" width="3" height="2" fill="#fff"/><rect x="1" y="9" width="3" height="2" fill="#fff"/><rect x="5" y="3" width="3" height="2" fill="#fff"/><rect x="5" y="6" width="3" height="2" fill="#fff"/><rect x="5" y="9" width="3" height="2" fill="#fff"/><rect x="9" y="3" width="3" height="2" fill="#fff"/><rect x="9" y="6" width="3" height="2" fill="#fff"/><rect x="9" y="9" width="3" height="2" fill="#fff"/></svg><span class="t" style="left:79.4px;top:258px;font-size:11px;line-height:12px;height:12px;color:#1e1e1e;letter-spacing:-0.190px;">HumanResources.Shift</span><svg class="a" style="left:43.5px;top:277px" width="6" height="8" viewBox="0 0 6 8"><path d="M1 0.5L4.5 4 1 7.5" stroke="#1e7fd8" stroke-width="1.7" fill="none"/></svg><svg class="a" style="left:59px;top:274px" width="13" height="12" viewBox="0 0 13 12"><rect x="0" y="0" width="13" height="12" fill="#3c3c3c"/><rect x="1" y="3" width="3" height="2" fill="#fff"/><rect x="1" y="6" width="3" height="2" fill="#fff"/><rect x="1" y="9" width="3" height="2" fill="#fff"/><rect x="5" y="3" width="3" height="2" fill="#fff"/><rect x="5" y="6" width="3" height="2" fill="#fff"/><rect x="5" y="9" width="3" height="2" fill="#fff"/><rect x="9" y="3" width="3" height="2" fill="#fff"/><rect x="9" y="6" width="3" height="2" fill="#fff"/><rect x="9" y="9" width="3" height="2" fill="#fff"/></svg><span class="t" style="left:79.4px;top:275px;font-size:11px;line-height:12px;height:12px;color:#1e1e1e;letter-spacing:-0.135px;">Person.AddressType</span><svg class="a" style="left:43.5px;top:294px" width="6" height="8" viewBox="0 0 6 8"><path d="M1 0.5L4.5 4 1 7.5" stroke="#1e7fd8" stroke-width="1.7" fill="none"/></svg><svg class="a" style="left:59px;top:291px" width="13" height="12" viewBox="0 0 13 12"><rect x="0" y="0" width="13" height="12" fill="#3c3c3c"/><rect x="1" y="3" width="3" height="2" fill="#fff"/><rect x="1" y="6" width="3" height="2" fill="#fff"/><rect x="1" y="9" width="3" height="2" fill="#fff"/><rect x="5" y="3" width="3" height="2" fill="#fff"/><rect x="5" y="6" width="3" height="2" fill="#fff"/><rect x="5" y="9" width="3" height="2" fill="#fff"/><rect x="9" y="3" width="3" height="2" fill="#fff"/><rect x="9" y="6" width="3" height="2" fill="#fff"/><rect x="9" y="9" width="3" height="2" fill="#fff"/></svg><span class="t" style="left:79.4px;top:292px;font-size:11px;line-height:12px;height:12px;color:#1e1e1e;letter-spacing:-0.198px;">Person.BusinessEntity</span><svg class="a" style="left:43.5px;top:311px" width="6" height="8" viewBox="0 0 6 8"><path d="M1 0.5L4.5 4 1 7.5" stroke="#1e7fd8" stroke-width="1.7" fill="none"/></svg><svg class="a" style="left:59px;top:308px" width="13" height="12" viewBox="0 0 13 12"><rect x="0" y="0" width="13" height="12" fill="#3c3c3c"/><rect x="1" y="3" width="3" height="2" fill="#fff"/><rect x="1" y="6" width="3" height="2" fill="#fff"/><rect x="1" y="9" width="3" height="2" fill="#fff"/><rect x="5" y="3" width="3" height="2" fill="#fff"/><rect x="5" y="6" width="3" height="2" fill="#fff"/><rect x="5" y="9" width="3" height="2" fill="#fff"/><rect x="9" y="3" width="3" height="2" fill="#fff"/><rect x="9" y="6" width="3" height="2" fill="#fff"/><rect x="9" y="9" width="3" height="2" fill="#fff"/></svg><span class="t" style="left:79.4px;top:309px;font-size:11px;line-height:12px;height:12px;color:#1e1e1e;letter-spacing:-0.124px;">Person.BusinessEntityContact</span><svg class="a" style="left:43.5px;top:328px" width="6" height="8" viewBox="0 0 6 8"><path d="M1 0.5L4.5 4 1 7.5" stroke="#1e7fd8" stroke-width="1.7" fill="none"/></svg><svg class="a" style="left:59px;top:325px" width="13" height="12" viewBox="0 0 13 12"><rect x="0" y="0" width="13" height="12" fill="#3c3c3c"/><rect x="1" y="3" width="3" height="2" fill="#fff"/><rect x="1" y="6" width="3" height="2" fill="#fff"/><rect x="1" y="9" width="3" height="2" fill="#fff"/><rect x="5" y="3" width="3" height="2" fill="#fff"/><rect x="5" y="6" width="3" height="2" fill="#fff"/><rect x="5" y="9" width="3" height="2" fill="#fff"/><rect x="9" y="3" width="3" height="2" fill="#fff"/><rect x="9" y="6" width="3" height="2" fill="#fff"/><rect x="9" y="9" width="3" height="2" fill="#fff"/></svg><span class="t" style="left:79.4px;top:326px;font-size:11px;line-height:12px;height:12px;color:#1e1e1e;letter-spacing:-0.054px;">Person.ContactType</span><svg class="a" style="left:43.5px;top:345px" width="6" height="8" viewBox="0 0 6 8"><path d="M1 0.5L4.5 4 1 7.5" stroke="#1e7fd8" stroke-width="1.7" fill="none"/></svg><svg class="a" style="left:59px;top:342px" width="13" height="12" viewBox="0 0 13 12"><rect x="0" y="0" width="13" height="12" fill="#3c3c3c"/><rect x="1" y="3" width="3" height="2" fill="#fff"/><rect x="1" y="6" width="3" height="2" fill="#fff"/><rect x="1" y="9" width="3" height="2" fill="#fff"/><rect x="5" y="3" width="3" height="2" fill="#fff"/><rect x="5" y="6" width="3" height="2" fill="#fff"/><rect x="5" y="9" width="3" height="2" fill="#fff"/><rect x="9" y="3" width="3" height="2" fill="#fff"/><rect x="9" y="6" width="3" height="2" fill="#fff"/><rect x="9" y="9" width="3" height="2" fill="#fff"/></svg><span class="t" style="left:79.4px;top:343px;font-size:11px;line-height:12px;height:12px;color:#1e1e1e;letter-spacing:-0.220px;">Person.Person</span><svg class="a" style="left:43.5px;top:362px" width="6" height="8" viewBox="0 0 6 8"><path d="M1 0.5L4.5 4 1 7.5" stroke="#1e7fd8" stroke-width="1.7" fill="none"/></svg><svg class="a" style="left:59px;top:359px" width="13" height="12" viewBox="0 0 13 12"><rect x="0" y="0" width="13" height="12" fill="#3c3c3c"/><rect x="1" y="3" width="3" height="2" fill="#fff"/><rect x="1" y="6" width="3" height="2" fill="#fff"/><rect x="1" y="9" width="3" height="2" fill="#fff"/><rect x="5" y="3" width="3" height="2" fill="#fff"/><rect x="5" y="6" width="3" height="2" fill="#fff"/><rect x="5" y="9" width="3" height="2" fill="#fff"/><rect x="9" y="3" width="3" height="2" fill="#fff"/><rect x="9" y="6" width="3" height="2" fill="#fff"/><rect x="9" y="9" width="3" height="2" fill="#fff"/></svg><span class="t" style="left:79.4px;top:360px;font-size:11px;line-height:12px;height:12px;color:#1e1e1e;letter-spacing:-0.181px;">Person.Person_json</span><svg class="a" style="left:43.5px;top:379px" width="6" height="8" viewBox="0 0 6 8"><path d="M1 0.5L4.5 4 1 7.5" stroke="#1e7fd8" stroke-width="1.7" fill="none"/></svg><svg class="a" style="left:58.5px;top:375px" width="16" height="14" viewBox="0 0 16 14"><rect x="0" y="0" width="13" height="12" fill="#3c3c3c"/><rect x="1" y="3" width="3" height="2" fill="#fff"/><rect x="1" y="6" width="3" height="2" fill="#fff"/><rect x="1" y="9" width="3" height="2" fill="#fff"/><rect x="5" y="3" width="3" height="2" fill="#fff"/><rect x="5" y="6" width="3" height="2" fill="#fff"/><rect x="5" y="9" width="3" height="2" fill="#fff"/><rect x="9" y="3" width="3" height="2" fill="#fff"/><rect x="9" y="6" width="3" height="2" fill="#fff"/><rect x="9" y="9" width="3" height="2" fill="#fff"/><circle cx="12" cy="10.5" r="3.3" fill="#fff" stroke="#3c3c3c" stroke-width="1"/><path d="M12 8.800v1.900h1.5" stroke="#3c3c3c" stroke-width="0.9" fill="none"/></svg><span class="t" style="left:79.4px;top:377px;font-size:11px;line-height:12px;height:12px;color:#1e1e1e;letter-spacing:-0.234px;">Person.Person_Temporal (System-Versioned)</span><svg class="a" style="left:43.5px;top:396px" width="6" height="8" viewBox="0 0 6 8"><path d="M1 0.5L4.5 4 1 7.5" stroke="#1e7fd8" stroke-width="1.7" fill="none"/></svg><svg class="a" style="left:59px;top:393px" width="13" height="12" viewBox="0 0 13 12"><rect x="0" y="0" width="13" height="12" fill="#3c3c3c"/><rect x="1" y="3" width="3" height="2" fill="#fff"/><rect x="1" y="6" width="3" height="2" fill="#fff"/><rect x="1" y="9" width="3" height="2" fill="#fff"/><rect x="5" y="3" width="3" height="2" fill="#fff"/><rect x="5" y="6" width="3" height="2" fill="#fff"/><rect x="5" y="9" width="3" height="2" fill="#fff"/><rect x="9" y="3" width="3" height="2" fill="#fff"/><rect x="9" y="6" width="3" height="2" fill="#fff"/><rect x="9" y="9" width="3" height="2" fill="#fff"/></svg><span class="t" style="left:79.4px;top:394px;font-size:11px;line-height:12px;height:12px;color:#1e1e1e;letter-spacing:-0.227px;">Person.PhoneNumberType</span><svg class="a" style="left:43.5px;top:413px" width="6" height="8" viewBox="0 0 6 8"><path d="M1 0.5L4.5 4 1 7.5" stroke="#1e7fd8" stroke-width="1.7" fill="none"/></svg><svg class="a" style="left:59px;top:410px" width="13" height="12" viewBox="0 0 13 12"><rect x="0" y="0" width="13" height="12" fill="#3c3c3c"/><rect x="1" y="3" width="3" height="2" fill="#fff"/><rect x="1" y="6" width="3" height="2" fill="#fff"/><rect x="1" y="9" width="3" height="2" fill="#fff"/><rect x="5" y="3" width="3" height="2" fill="#fff"/><rect x="5" y="6" width="3" height="2" fill="#fff"/><rect x="5" y="9" width="3" height="2" fill="#fff"/><rect x="9" y="3" width="3" height="2" fill="#fff"/><rect x="9" y="6" width="3" height="2" fill="#fff"/><rect x="9" y="9" width="3" height="2" fill="#fff"/></svg><span class="t" style="left:79.4px;top:411px;font-size:11px;line-height:12px;height:12px;color:#1e1e1e;letter-spacing:-0.179px;">Production.BillOfMaterials</span><svg class="a" style="left:43.5px;top:430px" width="6" height="8" viewBox="0 0 6 8"><path d="M1 0.5L4.5 4 1 7.5" stroke="#1e7fd8" stroke-width="1.7" fill="none"/></svg><svg class="a" style="left:59px;top:427px" width="13" height="12" viewBox="0 0 13 12"><rect x="0" y="0" width="13" height="12" fill="#3c3c3c"/><rect x="1" y="3" width="3" height="2" fill="#fff"/><rect x="1" y="6" width="3" height="2" fill="#fff"/><rect x="1" y="9" width="3" height="2" fill="#fff"/><rect x="5" y="3" width="3" height="2" fill="#fff"/><rect x="5" y="6" width="3" height="2" fill="#fff"/><rect x="5" y="9" width="3" height="2" fill="#fff"/><rect x="9" y="3" width="3" height="2" fill="#fff"/><rect x="9" y="6" width="3" height="2" fill="#fff"/><rect x="9" y="9" width="3" height="2" fill="#fff"/></svg><span class="t" style="left:79.4px;top:428px;font-size:11px;line-height:12px;height:12px;color:#1e1e1e;letter-spacing:-0.070px;">Production.Product</span><svg class="a" style="left:43.5px;top:447px" width="6" height="8" viewBox="0 0 6 8"><path d="M1 0.5L4.5 4 1 7.5" stroke="#1e7fd8" stroke-width="1.7" fill="none"/></svg><svg class="a" style="left:59px;top:444px" width="13" height="12" viewBox="0 0 13 12"><rect x="0" y="0" width="13" height="12" fill="#3c3c3c"/><rect x="1" y="3" width="3" height="2" fill="#fff"/><rect x="1" y="6" width="3" height="2" fill="#fff"/><rect x="1" y="9" width="3" height="2" fill="#fff"/><rect x="5" y="3" width="3" height="2" fill="#fff"/><rect x="5" y="6" width="3" height="2" fill="#fff"/><rect x="5" y="9" width="3" height="2" fill="#fff"/><rect x="9" y="3" width="3" height="2" fill="#fff"/><rect x="9" y="6" width="3" height="2" fill="#fff"/><rect x="9" y="9" width="3" height="2" fill="#fff"/></svg><span class="t" style="left:79.4px;top:445px;font-size:11px;line-height:12px;height:12px;color:#1e1e1e;letter-spacing:-0.123px;">Production.Product_ondisk</span><svg class="a" style="left:43.5px;top:464px" width="6" height="8" viewBox="0 0 6 8"><path d="M1 0.5L4.5 4 1 7.5" stroke="#1e7fd8" stroke-width="1.7" fill="none"/></svg><svg class="a" style="left:59px;top:461px" width="13" height="12" viewBox="0 0 13 12"><rect x="0" y="0" width="13" height="12" fill="#3c3c3c"/><rect x="1" y="3" width="3" height="2" fill="#fff"/><rect x="1" y="6" width="3" height="2" fill="#fff"/><rect x="1" y="9" width="3" height="2" fill="#fff"/><rect x="5" y="3" width="3" height="2" fill="#fff"/><rect x="5" y="6" width="3" height="2" fill="#fff"/><rect x="5" y="9" width="3" height="2" fill="#fff"/><rect x="9" y="3" width="3" height="2" fill="#fff"/><rect x="9" y="6" width="3" height="2" fill="#fff"/><rect x="9" y="9" width="3" height="2" fill="#fff"/></svg><span class="t" style="left:79.4px;top:462px;font-size:11px;line-height:12px;height:12px;color:#1e1e1e;letter-spacing:-0.053px;">Production.ProductCategory</span><svg class="a" style="left:43.5px;top:481px" width="6" height="8" viewBox="0 0 6 8"><path d="M1 0.5L4.5 4 1 7.5" stroke="#1e7fd8" stroke-width="1.7" fill="none"/></svg><svg class="a" style="left:59px;top:478px" width="13" height="12" viewBox="0 0 13 12"><rect x="0" y="0" width="13" height="12" fill="#3c3c3c"/><rect x="1" y="3" width="3" height="2" fill="#fff"/><rect x="1" y="6" width="3" height="2" fill="#fff"/><rect x="1" y="9" width="3" height="2" fill="#fff"/><rect x="5" y="3" width="3" height="2" fill="#fff"/><rect x="5" y="6" width="3" height="2" fill="#fff"/><rect x="5" y="9" width="3" height="2" fill="#fff"/><rect x="9" y="3" width="3" height="2" fill="#fff"/><rect x="9" y="6" width="3" height="2" fill="#fff"/><rect x="9" y="9" width="3" height="2" fill="#fff"/></svg><span class="t" style="left:79.4px;top:479px;font-size:11px;line-height:12px;height:12px;color:#1e1e1e;letter-spacing:-0.080px;">Production.ProductCostHistory</span><svg class="a" style="left:43.5px;top:498px" width="6" height="8" viewBox="0 0 6 8"><path d="M1 0.5L4.5 4 1 7.5" stroke="#1e7fd8" stroke-width="1.7" fill="none"/></svg><svg class="a" style="left:59px;top:495px" width="13" height="12" viewBox="0 0 13 12"><rect x="0" y="0" width="13" height="12" fill="#3c3c3c"/><rect x="1" y="3" width="3" height="2" fill="#fff"/><rect x="1" y="6" width="3" height="2" fill="#fff"/><rect x="1" y="9" width="3" height="2" fill="#fff"/><rect x="5" y="3" width="3" height="2" fill="#fff"/><rect x="5" y="6" width="3" height="2" fill="#fff"/><rect x="5" y="9" width="3" height="2" fill="#fff"/><rect x="9" y="3" width="3" height="2" fill="#fff"/><rect x="9" y="6" width="3" height="2" fill="#fff"/><rect x="9" y="9" width="3" height="2" fill="#fff"/></svg><span class="t" style="left:79.4px;top:496px;font-size:11px;line-height:12px;height:12px;color:#1e1e1e;letter-spacing:-0.116px;">Production.ProductDescription</span><svg class="a" style="left:43.5px;top:515px" width="6" height="8" viewBox="0 0 6 8"><path d="M1 0.5L4.5 4 1 7.5" stroke="#1e7fd8" stroke-width="1.7" fill="none"/></svg><svg class="a" style="left:59px;top:512px" width="13" height="12" viewBox="0 0 13 12"><rect x="0" y="0" width="13" height="12" fill="#3c3c3c"/><rect x="1" y="3" width="3" height="2" fill="#fff"/><rect x="1" y="6" width="3" height="2" fill="#fff"/><rect x="1" y="9" width="3" height="2" fill="#fff"/><rect x="5" y="3" width="3" height="2" fill="#fff"/><rect x="5" y="6" width="3" height="2" fill="#fff"/><rect x="5" y="9" width="3" height="2" fill="#fff"/><rect x="9" y="3" width="3" height="2" fill="#fff"/><rect x="9" y="6" width="3" height="2" fill="#fff"/><rect x="9" y="9" width="3" height="2" fill="#fff"/></svg><span class="t" style="left:79.4px;top:513px;font-size:11px;line-height:12px;height:12px;color:#1e1e1e;letter-spacing:-0.149px;">Production.ProductListPriceHistory</span><svg class="a" style="left:43.5px;top:532px" width="6" height="8" viewBox="0 0 6 8"><path d="M1 0.5L4.5 4 1 7.5" stroke="#1e7fd8" stroke-width="1.7" fill="none"/></svg><svg class="a" style="left:59px;top:529px" width="13" height="12" viewBox="0 0 13 12"><rect x="0" y="0" width="13" height="12" fill="#3c3c3c"/><rect x="1" y="3" width="3" height="2" fill="#fff"/><rect x="1" y="6" width="3" height="2" fill="#fff"/><rect x="1" y="9" width="3" height="2" fill="#fff"/><rect x="5" y="3" width="3" height="2" fill="#fff"/><rect x="5" y="6" width="3" height="2" fill="#fff"/><rect x="5" y="9" width="3" height="2" fill="#fff"/><rect x="9" y="3" width="3" height="2" fill="#fff"/><rect x="9" y="6" width="3" height="2" fill="#fff"/><rect x="9" y="9" width="3" height="2" fill="#fff"/></svg><span class="t" style="left:79.4px;top:530px;font-size:11px;line-height:12px;height:12px;color:#1e1e1e;letter-spacing:-0.153px;">Production.ProductModel</span><svg class="a" style="left:43.5px;top:549px" width="6" height="8" viewBox="0 0 6 8"><path d="M1 0.5L4.5 4 1 7.5" stroke="#1e7fd8" stroke-width="1.7" fill="none"/></svg><svg class="a" style="left:59px;top:546px" width="13" height="12" viewBox="0 0 13 12"><rect x="0" y="0" width="13" height="12" fill="#3c3c3c"/><rect x="1" y="3" width="3" height="2" fill="#fff"/><rect x="1" y="6" width="3" height="2" fill="#fff"/><rect x="1" y="9" width="3" height="2" fill="#fff"/><rect x="5" y="3" width="3" height="2" fill="#fff"/><rect x="5" y="6" width="3" height="2" fill="#fff"/><rect x="5" y="9" width="3" height="2" fill="#fff"/><rect x="9" y="3" width="3" height="2" fill="#fff"/><rect x="9" y="6" width="3" height="2" fill="#fff"/><rect x="9" y="9" width="3" height="2" fill="#fff"/></svg><span class="t" style="left:79.4px;top:547px;font-size:11px;line-height:12px;height:12px;color:#1e1e1e;letter-spacing:-0.114px;">Production.ProductPhoto</span><svg class="a" style="left:43.5px;top:566px" width="6" height="8" viewBox="0 0 6 8"><path d="M1 0.5L4.5 4 1 7.5" stroke="#1e7fd8" stroke-width="1.7" fill="none"/></svg><svg class="a" style="left:59px;top:563px" width="13" height="12" viewBox="0 0 13 12"><rect x="0" y="0" width="13" height="12" fill="#3c3c3c"/><rect x="1" y="3" width="3" height="2" fill="#fff"/><rect x="1" y="6" width="3" height="2" fill="#fff"/><rect x="1" y="9" width="3" height="2" fill="#fff"/><rect x="5" y="3" width="3" height="2" fill="#fff"/><rect x="5" y="6" width="3" height="2" fill="#fff"/><rect x="5" y="9" width="3" height="2" fill="#fff"/><rect x="9" y="3" width="3" height="2" fill="#fff"/><rect x="9" y="6" width="3" height="2" fill="#fff"/><rect x="9" y="9" width="3" height="2" fill="#fff"/></svg><span class="t" style="left:79.4px;top:564px;font-size:11px;line-height:12px;height:12px;color:#1e1e1e;letter-spacing:-0.111px;">Production.ProductProductPhoto</span><svg class="a" style="left:43.5px;top:583px" width="6" height="8" viewBox="0 0 6 8"><path d="M1 0.5L4.5 4 1 7.5" stroke="#1e7fd8" stroke-width="1.7" fill="none"/></svg><svg class="a" style="left:59px;top:580px" width="13" height="12" viewBox="0 0 13 12"><rect x="0" y="0" width="13" height="12" fill="#3c3c3c"/><rect x="1" y="3" width="3" height="2" fill="#fff"/><rect x="1" y="6" width="3" height="2" fill="#fff"/><rect x="1" y="9" width="3" height="2" fill="#fff"/><rect x="5" y="3" width="3" height="2" fill="#fff"/><rect x="5" y="6" width="3" height="2" fill="#fff"/><rect x="5" y="9" width="3" height="2" fill="#fff"/><rect x="9" y="3" width="3" height="2" fill="#fff"/><rect x="9" y="6" width="3" height="2" fill="#fff"/><rect x="9" y="9" width="3" height="2" fill="#fff"/></svg><span class="t" style="left:79.4px;top:581px;font-size:11px;line-height:12px;height:12px;color:#1e1e1e;letter-spacing:-0.109px;">Production.ProductReview</span><svg class="a" style="left:43.5px;top:600px" width="6" height="8" viewBox="0 0 6 8"><path d="M1 0.5L4.5 4 1 7.5" stroke="#1e7fd8" stroke-width="1.7" fill="none"/></svg><svg class="a" style="left:59px;top:597px" width="13" height="12" viewBox="0 0 13 12"><rect x="0" y="0" width="13" height="12" fill="#3c3c3c"/><rect x="1" y="3" width="3" height="2" fill="#fff"/><rect x="1" y="6" width="3" height="2" fill="#fff"/><rect x="1" y="9" width="3" height="2" fill="#fff"/><rect x="5" y="3" width="3" height="2" fill="#fff"/><rect x="5" y="6" width="3" height="2" fill="#fff"/><rect x="5" y="9" width="3" height="2" fill="#fff"/><rect x="9" y="3" width="3" height="2" fill="#fff"/><rect x="9" y="6" width="3" height="2" fill="#fff"/><rect x="9" y="9" width="3" height="2" fill="#fff"/></svg><span class="t" style="left:79.4px;top:598px;font-size:11px;line-height:12px;height:12px;color:#1e1e1e;letter-spacing:-0.190px;">Production.ProductSubcategory</span></div>
<div class="a" style="left:256px;top:172px;width:17px;height:602px;background:#f3f3f5;"></div>
<div class="a" style="left:256px;top:189px;width:17px;height:433px;background:#dcdce2;"></div>
<svg class="a" style="left:260.5px;top:177.5px" width="8" height="5" viewBox="0 0 8 5"><path d="M0 5h8L4 0z" fill="#6f6f73"/></svg>
<svg class="a" style="left:260.5px;top:763px" width="8" height="5" viewBox="0 0 8 5"><path d="M0 0h8L4 5z" fill="#6f6f73"/></svg>
<div class="a" style="left:3px;top:774px;width:270px;height:17px;background:#f3f3f5;"></div>
<div class="a" style="left:20px;top:774px;width:144px;height:17px;background:#dcdce2;"></div>
<svg class="a" style="left:8.5px;top:778px" width="5" height="8" viewBox="0 0 5 8"><path d="M5 0v8L0 4z" fill="#6f6f73"/></svg>
<svg class="a" style="left:245px;top:778px" width="5" height="8" viewBox="0 0 5 8"><path d="M0 0v8l5-4z" fill="#6f6f73"/></svg>
<div class="a" style="left:278px;top:116px;width:922px;height:676px;background:#f4f4f4;border:1px solid #cccedb;border-right:none"></div>
<div class="a" style="left:622px;top:116px;width:578px;height:27px;background:#eeeef2;"></div>
<div class="a" style="left:278px;top:143px;width:920px;height:1px;background:#cccedb;"></div>
<div class="a" style="left:279px;top:117px;width:120px;height:26px;background:#f5f5f5;"></div>
<div class="a" style="left:399px;top:117px;width:1px;height:26px;background:#cccedb;"></div>
<svg class="a" style="left:288.7px;top:122.6px" width="13" height="13" viewBox="0 0 13 13"><circle cx="6.5" cy="6.5" r="5.6" fill="none" stroke="#555" stroke-width="1.1" stroke-dasharray="28 7"/><circle cx="6.5" cy="6.5" r="3.3" fill="none" stroke="#555" stroke-width="1" stroke-dasharray="16 5"/><path d="M6.5 4.500v2.500" stroke="#555" stroke-width="1"/></svg>
<span class="t" style="left:305.4px;top:124px;font-size:11px;line-height:12px;height:12px;color:#3a3a3a;font-weight:700;letter-spacing:0.558px;">Start Page</span>
<div class="a" style="left:400px;top:117px;width:222px;height:27px;background:#0078d0;"></div>
<svg class="a" style="left:407.6px;top:123.5px" width="15" height="11" viewBox="0 0 15 11"><path d="M0.5 6h3l1.7-4.5 2.5 8.5 2.5-8.5 1.7 4.5h3" stroke="#fff" stroke-width="3" fill="none" stroke-linejoin="round" stroke-linecap="round"/><path d="M0.5 6h3l1.7-4.5 2.5 8.5 2.5-8.5 1.7 4.5h3" stroke="#3a3a3a" stroke-width="1" fill="none" stroke-linejoin="round"/></svg>
<span class="t" style="left:427.2px;top:124px;font-size:11px;line-height:12px;height:12px;color:#fff;font-weight:700;letter-spacing:0.435px;">Monitor - dbfsqlsrv\SQL2019</span>
<div class="a" style="left:601.5px;top:124.5px;width:11px;height:11px;background:#1f4d7e;border-radius:50%"></div>
<svg class="a" style="left:604.5px;top:127.5px" width="5" height="5" viewBox="0 0 5 5"><path d="M0.500 0.500l4 4M4.500 0.500l-4 4" stroke="#1a86e0" stroke-width="1.500"/></svg>
<svg class="a" style="left:1177.3px;top:127.8px" width="6.4" height="3.4" viewBox="0 0 6.4 3.4"><path d="M0 0h6.400L3.200 3.400z" fill="#444"/></svg>
<span class="t" style="left:294.5px;top:158px;font-size:11px;line-height:12px;height:12px;color:#1c5fa8;letter-spacing:-0.043px;">Overview</span>
<span class="t" style="left:375.0px;top:158px;font-size:11px;line-height:12px;height:12px;color:#3c3c3c;letter-spacing:0.013px;">Data IO</span>
<span class="t" style="left:448.0px;top:158px;font-size:11px;line-height:12px;height:12px;color:#3c3c3c;letter-spacing:-0.177px;">Databases</span>
<span class="t" style="left:534.0px;top:158px;font-size:11px;line-height:12px;height:12px;color:#3c3c3c;letter-spacing:0.028px;">Wait Stats</span>
<span class="t" style="left:619.0px;top:158px;font-size:11px;line-height:12px;height:12px;color:#3c3c3c;letter-spacing:-0.119px;">Top Queries</span>
<span class="t" style="left:712.0px;top:158px;font-size:11px;line-height:12px;height:12px;color:#3c3c3c;letter-spacing:-0.455px;">Sessions</span>
<span class="t" style="left:788.0px;top:158px;font-size:11px;line-height:12px;height:12px;color:#3c3c3c;letter-spacing:-0.458px;">Backups</span>
<div class="a" style="left:283px;top:182px;width:77px;height:2px;background:#1c5fa8;"></div>
<div class="a" style="left:279px;top:184px;width:918px;height:591px;background:#fff;"></div>
<div class="a" style="left:279px;top:775px;width:918px;height:16px;background:#eeeeee;"></div>
<div class="a" style="left:296px;top:782px;width:751px;height:2px;background:#7c7c7c;"></div>
<div class="a" style="left:1197px;top:144px;width:1px;height:648px;background:#cccedb;"></div>
<div class="a" style="left:1198px;top:144px;width:2px;height:648px;background:#eeeef2;"></div>
<div class="a" style="left:279px;top:377px;width:360px;height:1px;background:#cccedb;"></div>
<div class="a" style="left:279px;top:571px;width:360px;height:1px;background:#cccedb;"></div>
<div class="a" style="left:638px;top:184px;width:1px;height:590px;background:#cccedb;"></div>
<span class="t" style="left:286.8px;top:193px;font-size:16.5px;line-height:18px;height:18px;color:#3a3a3a;letter-spacing:-0.294px;">CPU Utilization, %</span>
<span class="t" style="left:286.8px;top:387px;font-size:16.5px;line-height:18px;height:18px;color:#3a3a3a;letter-spacing:-0.222px;">Memory Utilization, Gb</span>
<span class="t" style="left:286.8px;top:581px;font-size:16.5px;line-height:18px;height:18px;color:#3a3a3a;letter-spacing:-0.082px;">Disk Activity, Mb</span>
<div class="a" style="left:312px;top:219px;width:318px;height:143px;background:#fff;"></div><div class="a" style="left:312px;top:219px;width:318px;height:1px;background:#c9cade;"></div><div class="a" style="left:312px;top:219px;width:1px;height:143px;background:#c9cade;"></div><div class="a" style="left:629px;top:220px;width:1px;height:142px;background:#e4e5f0;"></div><div class="a" style="left:313px;top:361px;width:317px;height:1px;background:#e4e5f0;"></div>
<div class="a" style="left:314px;top:245px;width:315px;height:1px;background-image:linear-gradient(90deg,#cfcfd6 1px,transparent 1px);background-size:2px 1px"></div><div class="a" style="left:314px;top:284px;width:315px;height:1px;background-image:linear-gradient(90deg,#cfcfd6 1px,transparent 1px);background-size:2px 1px"></div><div class="a" style="left:314px;top:322px;width:315px;height:1px;background-image:linear-gradient(90deg,#cfcfd6 1px,transparent 1px);background-size:2px 1px"></div>
<div class="a" style="left:310px;top:258px;width:2px;height:1px;background:#d3d4e3;"></div><div class="a" style="left:310px;top:271px;width:2px;height:1px;background:#d3d4e3;"></div><div class="a" style="left:310px;top:297px;width:2px;height:1px;background:#d3d4e3;"></div><div class="a" style="left:310px;top:310px;width:2px;height:1px;background:#d3d4e3;"></div><div class="a" style="left:310px;top:335px;width:2px;height:1px;background:#d3d4e3;"></div><div class="a" style="left:310px;top:348px;width:2px;height:1px;background:#d3d4e3;"></div><div class="a" style="left:310px;top:232px;width:2px;height:1px;background:#d3d4e3;"></div><div class="a" style="left:307px;top:245px;width:5px;height:1px;background:#c9cade;"></div><div class="a" style="left:307px;top:284px;width:5px;height:1px;background:#c9cade;"></div><div class="a" style="left:307px;top:322px;width:5px;height:1px;background:#c9cade;"></div><div class="a" style="left:307px;top:361px;width:5px;height:1px;background:#c9cade;"></div>
<span class="t" style="left:289.3px;top:239px;font-size:11px;line-height:12px;height:12px;color:#1e1e1e;letter-spacing:-0.375px;">90</span>
<span class="t" style="left:289.3px;top:278px;font-size:11px;line-height:12px;height:12px;color:#1e1e1e;letter-spacing:-0.375px;">60</span>
<span class="t" style="left:289.3px;top:316px;font-size:11px;line-height:12px;height:12px;color:#1e1e1e;letter-spacing:-0.375px;">30</span>
<span class="t" style="left:295.2px;top:355px;font-size:11px;line-height:12px;height:12px;color:#1e1e1e;letter-spacing:-0.525px;">0</span>
<svg class="a" style="left:313px;top:340px" width="317" height="22" viewBox="0 0 317 22"><path d="M113 21l4.400-4.800H145l4 4.800z" fill="#55b0cd"/><path d="M6 21l4-3.500h17l5.500-4H42l6 7.500z" fill="#e34d56"/><path d="M134 21l5.500-2.600h15.500l5 2.600z" fill="#e34d56"/><path d="M0 20.500h316" stroke="#c03a48" stroke-width="1.200"/><path d="M0 20.500h6.500M200 20.500h18" stroke="#4fa6c4" stroke-width="1.200"/></svg>
<div class="a" style="left:312px;top:413px;width:318px;height:143px;background:#fff;"></div><div class="a" style="left:312px;top:413px;width:318px;height:1px;background:#c9cade;"></div><div class="a" style="left:312px;top:413px;width:1px;height:143px;background:#c9cade;"></div><div class="a" style="left:629px;top:414px;width:1px;height:142px;background:#e4e5f0;"></div><div class="a" style="left:313px;top:555px;width:317px;height:1px;background:#e4e5f0;"></div>
<div class="a" style="left:313px;top:441px;width:316px;height:69px;background:#55b0cd;"></div>
<div class="a" style="left:313px;top:510px;width:316px;height:45px;background:#c03a48;"></div>
<div class="a" style="left:314px;top:426px;width:315px;height:1px;background-image:linear-gradient(90deg,#cfcfd6 1px,transparent 1px);background-size:2px 1px"></div>
<div class="a" style="left:314px;top:441px;width:315px;height:1px;background-image:linear-gradient(90deg,rgba(0,0,0,.08) 1px,transparent 1px);background-size:2px 1px"></div><div class="a" style="left:314px;top:458px;width:315px;height:1px;background-image:linear-gradient(90deg,rgba(0,0,0,.08) 1px,transparent 1px);background-size:2px 1px"></div><div class="a" style="left:314px;top:490px;width:315px;height:1px;background-image:linear-gradient(90deg,rgba(0,0,0,.08) 1px,transparent 1px);background-size:2px 1px"></div><div class="a" style="left:314px;top:510px;width:315px;height:1px;background-image:linear-gradient(90deg,rgba(0,0,0,.08) 1px,transparent 1px);background-size:2px 1px"></div>
<div class="a" style="left:310px;top:437px;width:2px;height:1px;background:#d3d4e3;"></div><div class="a" style="left:310px;top:448px;width:2px;height:1px;background:#d3d4e3;"></div><div class="a" style="left:310px;top:469px;width:2px;height:1px;background:#d3d4e3;"></div><div class="a" style="left:310px;top:480px;width:2px;height:1px;background:#d3d4e3;"></div><div class="a" style="left:310px;top:501px;width:2px;height:1px;background:#d3d4e3;"></div><div class="a" style="left:310px;top:512px;width:2px;height:1px;background:#d3d4e3;"></div><div class="a" style="left:310px;top:534px;width:2px;height:1px;background:#d3d4e3;"></div><div class="a" style="left:310px;top:545px;width:2px;height:1px;background:#d3d4e3;"></div><div class="a" style="left:310px;top:415px;width:2px;height:1px;background:#d3d4e3;"></div><div class="a" style="left:307px;top:426px;width:5px;height:1px;background:#c9cade;"></div><div class="a" style="left:307px;top:458px;width:5px;height:1px;background:#c9cade;"></div><div class="a" style="left:307px;top:490px;width:5px;height:1px;background:#c9cade;"></div><div class="a" style="left:307px;top:523px;width:5px;height:1px;background:#c9cade;"></div><div class="a" style="left:307px;top:555px;width:5px;height:1px;background:#c9cade;"></div>
<span class="t" style="left:289.3px;top:420px;font-size:11px;line-height:12px;height:12px;color:#1e1e1e;letter-spacing:-0.375px;">20</span>
<span class="t" style="left:289.3px;top:452px;font-size:11px;line-height:12px;height:12px;color:#1e1e1e;letter-spacing:-0.375px;">15</span>
<span class="t" style="left:289.3px;top:484px;font-size:11px;line-height:12px;height:12px;color:#1e1e1e;letter-spacing:-0.375px;">10</span>
<span class="t" style="left:295.5px;top:517px;font-size:11px;line-height:12px;height:12px;color:#1e1e1e;letter-spacing:-0.525px;">5</span>
<span class="t" style="left:295.5px;top:549px;font-size:11px;line-height:12px;height:12px;color:#1e1e1e;letter-spacing:-0.525px;">0</span>
<span class="t" style="left:555.7px;top:584px;font-size:11px;line-height:12px;height:12px;color:#1e1e1e;letter-spacing:-0.381px;">all disks</span>
<div class="a" style="left:550px;top:580px;width:80px;height:20px;background:#fff;border:1px solid #c9cade"></div>
<span class="t" style="left:555.7px;top:584px;font-size:11px;line-height:12px;height:12px;color:#1e1e1e;letter-spacing:-0.381px;">all disks</span>
<svg class="a" style="left:617.4px;top:588.3px" width="6.4" height="3.4" viewBox="0 0 6.4 3.4"><path d="M0 0h6.400L3.200 3.400z" fill="#555"/></svg>
<div class="a" style="left:315px;top:608px;width:315px;height:151px;background:#fff;"></div><div class="a" style="left:315px;top:608px;width:315px;height:1px;background:#c9cade;"></div><div class="a" style="left:315px;top:608px;width:1px;height:151px;background:#c9cade;"></div><div class="a" style="left:629px;top:609px;width:1px;height:150px;background:#e4e5f0;"></div><div class="a" style="left:316px;top:758px;width:314px;height:1px;background:#e4e5f0;"></div>
<div class="a" style="left:317px;top:622px;width:312px;height:1px;background-image:linear-gradient(90deg,#cfcfd6 1px,transparent 1px);background-size:2px 1px"></div>
<div class="a" style="left:313px;top:637px;width:2px;height:1px;background:#d3d4e3;"></div><div class="a" style="left:313px;top:652px;width:2px;height:1px;background:#d3d4e3;"></div><div class="a" style="left:313px;top:682px;width:2px;height:1px;background:#d3d4e3;"></div><div class="a" style="left:313px;top:697px;width:2px;height:1px;background:#d3d4e3;"></div><div class="a" style="left:313px;top:728px;width:2px;height:1px;background:#d3d4e3;"></div><div class="a" style="left:313px;top:743px;width:2px;height:1px;background:#d3d4e3;"></div><div class="a" style="left:310px;top:622px;width:5px;height:1px;background:#c9cade;"></div><div class="a" style="left:310px;top:667px;width:5px;height:1px;background:#c9cade;"></div><div class="a" style="left:310px;top:713px;width:5px;height:1px;background:#c9cade;"></div><div class="a" style="left:310px;top:758px;width:5px;height:1px;background:#c9cade;"></div>
<span class="t" style="left:289.5px;top:616px;font-size:11px;line-height:12px;height:12px;color:#1e1e1e;letter-spacing:-0.266px;">0.3</span>
<span class="t" style="left:289.5px;top:661px;font-size:11px;line-height:12px;height:12px;color:#1e1e1e;letter-spacing:-0.266px;">0.2</span>
<span class="t" style="left:289.5px;top:707px;font-size:11px;line-height:12px;height:12px;color:#1e1e1e;letter-spacing:-0.266px;">0.1</span>
<span class="t" style="left:298.5px;top:752px;font-size:11px;line-height:12px;height:12px;color:#1e1e1e;letter-spacing:-0.525px;">0</span>
<svg class="a" style="left:316px;top:608px" width="314" height="151" viewBox="0 0 314 151"><polygon points="0.0,14.3 2.7,35.0 5.1,59.3 0.0,59.3" fill="#e34d56"/><polygon points="21.3,14.3 31.7,14.3 34.7,33.0 31.7,59.3 21.1,59.3 18.1,33.0" fill="#e34d56"/><polygon points="58.4,14.3 74.0,14.3 76.9,33.0 74.0,59.3 58.0,59.3 55.3,33.0" fill="#e34d56"/><polygon points="90.0,14.3 111.5,14.3 106.7,59.3 90.0,59.3 87.3,33.0" fill="#e34d56"/><polygon points="5.1,14.3 16.0,14.3 18.4,33.0 15.7,59.3 5.1,59.3 2.4,33.7" fill="#55b0cd"/><polygon points="37.1,14.3 53.3,14.3 55.6,33.0 53.1,59.3 37.1,59.3 34.4,33.0" fill="#55b0cd"/><polygon points="79.3,14.3 84.7,14.3 87.3,33.0 84.7,59.3 79.6,59.3 76.9,33.0" fill="#55b0cd"/><polygon points="0.5,150.5 0.5,59.3 15.7,59.3 18.4,33.0 21.1,59.3 31.7,59.3 34.5,33.0 37.1,59.3 53.1,59.3 55.5,33.0 58.0,59.3 74.0,59.3 76.9,33.0 79.6,59.3 84.7,59.3 87.3,33.0 90.0,59.3 106.4,59.3 111.5,14.3 122.0,14.3 127.3,59.3 148.7,59.3 153.7,14.3 159.0,14.3 165.0,59.3 185.7,59.3 191.2,14.3 201.9,14.3 207.4,59.3 217.6,59.3 223.1,14.3 239.6,14.3 245.1,59.3 254.7,59.3 260.2,14.3 271.2,14.3 276.7,59.3 286.9,59.3 292.4,14.3 308.6,14.3 313.5,51.0 313.5,150.5" fill="#c03a48"/><rect x="184.60000000000002" y="1.5" width="123.39999999999998" height="39.799999999999955" fill="#fff"/></svg>
<div class="a" style="left:514px;top:624px;width:15px;height:15px;background:#fff;border:1px solid #55b0cd"></div>
<svg class="a" style="left:517px;top:627px" width="9" height="9" viewBox="0 0 9 9"><path d="M1 4.500l2.500 3L8 1" stroke="#55b0cd" stroke-width="2" fill="none"/></svg>
<span class="t" style="left:535.2px;top:625px;font-size:11px;line-height:12px;height:12px;color:#1e1e1e;letter-spacing:-0.008px;">read</span>
<div class="a" style="left:566px;top:624px;width:15px;height:15px;background:#fff;border:1px solid #e34d56"></div>
<svg class="a" style="left:569px;top:627px" width="9" height="9" viewBox="0 0 9 9"><path d="M1 4.500l2.500 3L8 1" stroke="#e34d56" stroke-width="2" fill="none"/></svg>
<span class="t" style="left:587.2px;top:625px;font-size:11px;line-height:12px;height:12px;color:#1e1e1e;letter-spacing:0.233px;">write</span>
<div class="a" style="left:782px;top:184px;width:1px;height:590px;background:#cccedb;"></div>
<div class="a" style="left:926px;top:184px;width:1px;height:590px;background:#cccedb;"></div>
<div class="a" style="left:639px;top:277px;width:431px;height:1px;background:#cccedb;"></div>
<div class="a" style="left:639px;top:377px;width:431px;height:1px;background:#cccedb;"></div>
<div class="a" style="left:639px;top:471px;width:431px;height:1px;background:#cccedb;"></div>
<div class="a" style="left:639px;top:571px;width:431px;height:1px;background:#cccedb;"></div>
<div class="a" style="left:639px;top:671px;width:431px;height:1px;background:#cccedb;"></div>
<span class="t" style="left:647.5px;top:193px;font-size:29.5px;line-height:33px;height:33px;color:#3a3a3a;letter-spacing:-2.264px;">10</span>
<span class="t" style="left:646.7px;top:231px;font-size:11px;line-height:12px;height:12px;color:#8e8e9a;letter-spacing:-0.392px;">Total CPU</span>
<div class="a" style="left:651px;top:268px;width:7px;height:1px;background:#1b9ad8;"></div><div class="a" style="left:664px;top:268px;width:7px;height:1px;background:#1b9ad8;"></div><div class="a" style="left:676px;top:268px;width:7px;height:1px;background:#1b9ad8;"></div><div class="a" style="left:688px;top:268px;width:8px;height:1px;background:#1b9ad8;"></div><div class="a" style="left:701px;top:268px;width:7px;height:1px;background:#1b9ad8;"></div><div class="a" style="left:713px;top:268px;width:7px;height:1px;background:#1b9ad8;"></div><div class="a" style="left:725px;top:268px;width:8px;height:1px;background:#1b9ad8;"></div><div class="a" style="left:738px;top:268px;width:7px;height:1px;background:#1b9ad8;"></div><div class="a" style="left:750px;top:267px;width:7px;height:2px;background:#1b9ad8;"></div><div class="a" style="left:762px;top:267px;width:8px;height:2px;background:#1b9ad8;"></div>
<span class="t" style="left:791.0px;top:193px;font-size:29.5px;line-height:33px;height:33px;color:#3a3a3a;letter-spacing:-2.922px;">9</span>
<span class="t" style="left:790.2px;top:231px;font-size:11px;line-height:12px;height:12px;color:#8e8e9a;letter-spacing:-0.147px;">Batch Requests/sec</span>
<div class="a" style="left:795px;top:267px;width:7px;height:2px;background:#8a9a30;"></div><div class="a" style="left:808px;top:267px;width:7px;height:2px;background:#8a9a30;"></div><div class="a" style="left:820px;top:267px;width:7px;height:2px;background:#8a9a30;"></div><div class="a" style="left:832px;top:267px;width:8px;height:2px;background:#8a9a30;"></div><div class="a" style="left:845px;top:267px;width:7px;height:2px;background:#8a9a30;"></div><div class="a" style="left:857px;top:267px;width:7px;height:2px;background:#8a9a30;"></div><div class="a" style="left:869px;top:267px;width:8px;height:2px;background:#8a9a30;"></div><div class="a" style="left:882px;top:267px;width:7px;height:2px;background:#8a9a30;"></div><div class="a" style="left:894px;top:267px;width:7px;height:2px;background:#8a9a30;"></div><div class="a" style="left:906px;top:267px;width:8px;height:2px;background:#8a9a30;"></div>
<span class="t" style="left:935.1px;top:193px;font-size:29.5px;line-height:33px;height:33px;color:#3a3a3a;letter-spacing:-0.805px;">0/0</span>
<span class="t" style="left:934.2px;top:231px;font-size:11px;line-height:12px;height:12px;color:#8e8e9a;letter-spacing:-0.307px;">Compile/Recompile,sec</span>
<span class="t" style="left:647.5px;top:287px;font-size:29.5px;line-height:33px;height:33px;color:#3a3a3a;letter-spacing:-1.463px;">11</span>
<span class="t" style="left:646.7px;top:325px;font-size:11px;line-height:12px;height:12px;color:#8e8e9a;letter-spacing:-0.173px;">Waiting Tasks</span>
<div class="a" style="left:651px;top:362px;width:7px;height:7px;background:#f26522;"></div><div class="a" style="left:664px;top:362px;width:7px;height:7px;background:#f26522;"></div><div class="a" style="left:676px;top:362px;width:7px;height:7px;background:#f26522;"></div><div class="a" style="left:688px;top:362px;width:8px;height:7px;background:#f26522;"></div><div class="a" style="left:701px;top:362px;width:7px;height:7px;background:#f26522;"></div><div class="a" style="left:713px;top:362px;width:7px;height:7px;background:#f26522;"></div><div class="a" style="left:725px;top:362px;width:8px;height:7px;background:#f26522;"></div><div class="a" style="left:738px;top:362px;width:7px;height:7px;background:#f26522;"></div><div class="a" style="left:750px;top:362px;width:7px;height:7px;background:#f26522;"></div><div class="a" style="left:762px;top:362px;width:8px;height:7px;background:#f26522;"></div>
<span class="t" style="left:791.0px;top:287px;font-size:29.5px;line-height:33px;height:33px;color:#3a3a3a;letter-spacing:-1.066px;">15/15</span>
<span class="t" style="left:790.2px;top:325px;font-size:11px;line-height:12px;height:12px;color:#8e8e9a;letter-spacing:-0.134px;">Connections (user/logical)</span>
<span class="t" style="left:935.1px;top:287px;font-size:29.5px;line-height:33px;height:33px;color:#3a3a3a;letter-spacing:-3.222px;">0</span>
<span class="t" style="left:934.2px;top:325px;font-size:11px;line-height:12px;height:12px;color:#8e8e9a;letter-spacing:-0.373px;">Deadlocks</span>
<div class="a" style="left:939px;top:368px;width:7px;height:1px;background:#8a9a30;"></div><div class="a" style="left:952px;top:368px;width:7px;height:1px;background:#8a9a30;"></div><div class="a" style="left:964px;top:368px;width:7px;height:1px;background:#8a9a30;"></div><div class="a" style="left:976px;top:368px;width:8px;height:1px;background:#8a9a30;"></div><div class="a" style="left:989px;top:368px;width:7px;height:1px;background:#8a9a30;"></div><div class="a" style="left:1001px;top:368px;width:7px;height:1px;background:#8a9a30;"></div><div class="a" style="left:1013px;top:368px;width:8px;height:1px;background:#8a9a30;"></div><div class="a" style="left:1026px;top:368px;width:7px;height:1px;background:#8a9a30;"></div><div class="a" style="left:1038px;top:368px;width:7px;height:1px;background:#8a9a30;"></div><div class="a" style="left:1050px;top:368px;width:8px;height:1px;background:#8a9a30;"></div>
<span class="t" style="left:647.5px;top:387px;font-size:29.5px;line-height:33px;height:33px;color:#3a3a3a;letter-spacing:-2.922px;">7</span>
<span class="t" style="left:646.7px;top:425px;font-size:11px;line-height:12px;height:12px;color:#8e8e9a;letter-spacing:-0.141px;">Transactions/sec</span>
<div class="a" style="left:651px;top:462px;width:7px;height:1px;background:#8a9a30;"></div><div class="a" style="left:664px;top:462px;width:7px;height:1px;background:#8a9a30;"></div><div class="a" style="left:676px;top:462px;width:7px;height:1px;background:#8a9a30;"></div><div class="a" style="left:688px;top:462px;width:8px;height:1px;background:#8a9a30;"></div><div class="a" style="left:701px;top:462px;width:7px;height:1px;background:#8a9a30;"></div><div class="a" style="left:713px;top:461px;width:7px;height:2px;background:#8a9a30;"></div><div class="a" style="left:725px;top:461px;width:8px;height:2px;background:#8a9a30;"></div><div class="a" style="left:738px;top:461px;width:7px;height:2px;background:#8a9a30;"></div><div class="a" style="left:750px;top:461px;width:7px;height:2px;background:#8a9a30;"></div><div class="a" style="left:762px;top:462px;width:8px;height:1px;background:#8a9a30;"></div>
<span class="t" style="left:791.0px;top:387px;font-size:29.5px;line-height:33px;height:33px;color:#3a3a3a;letter-spacing:-2.164px;">16</span>
<span class="t" style="left:790.2px;top:425px;font-size:11px;line-height:12px;height:12px;color:#8e8e9a;letter-spacing:-0.317px;">Full Scans/sec</span>
<div class="a" style="left:795px;top:462px;width:7px;height:1px;background:#f26522;"></div><div class="a" style="left:808px;top:462px;width:7px;height:1px;background:#f26522;"></div><div class="a" style="left:820px;top:462px;width:7px;height:1px;background:#f26522;"></div><div class="a" style="left:832px;top:462px;width:8px;height:1px;background:#f26522;"></div><div class="a" style="left:845px;top:462px;width:7px;height:1px;background:#f26522;"></div><div class="a" style="left:857px;top:462px;width:7px;height:1px;background:#f26522;"></div><div class="a" style="left:869px;top:462px;width:8px;height:1px;background:#f26522;"></div><div class="a" style="left:882px;top:462px;width:7px;height:1px;background:#f26522;"></div><div class="a" style="left:894px;top:461px;width:7px;height:2px;background:#f26522;"></div><div class="a" style="left:906px;top:461px;width:8px;height:2px;background:#f26522;"></div>
<span class="t" style="left:935.1px;top:387px;font-size:29.5px;line-height:33px;height:33px;color:#3a3a3a;letter-spacing:-1.910px;">3049</span>
<span class="t" style="left:934.2px;top:425px;font-size:11px;line-height:12px;height:12px;color:#8e8e9a;letter-spacing:-0.301px;">Range Scans/sec</span>
<div class="a" style="left:939px;top:461px;width:7px;height:2px;background:#1b9ad8;"></div><div class="a" style="left:952px;top:462px;width:7px;height:1px;background:#1b9ad8;"></div><div class="a" style="left:964px;top:462px;width:7px;height:1px;background:#1b9ad8;"></div><div class="a" style="left:976px;top:462px;width:8px;height:1px;background:#1b9ad8;"></div><div class="a" style="left:989px;top:462px;width:7px;height:1px;background:#1b9ad8;"></div><div class="a" style="left:1001px;top:462px;width:7px;height:1px;background:#1b9ad8;"></div><div class="a" style="left:1013px;top:462px;width:8px;height:1px;background:#1b9ad8;"></div><div class="a" style="left:1026px;top:462px;width:7px;height:1px;background:#1b9ad8;"></div><div class="a" style="left:1038px;top:461px;width:7px;height:2px;background:#1b9ad8;"></div><div class="a" style="left:1050px;top:461px;width:8px;height:2px;background:#1b9ad8;"></div>
<span class="t" style="left:647.5px;top:481px;font-size:29.5px;line-height:33px;height:33px;color:#3a3a3a;letter-spacing:-2.922px;">0</span>
<span class="t" style="left:646.7px;top:519px;font-size:11px;line-height:12px;height:12px;color:#8e8e9a;letter-spacing:-0.251px;">Page Reads/sec</span>
<div class="a" style="left:651px;top:562px;width:7px;height:1px;background:#1b9ad8;"></div><div class="a" style="left:664px;top:562px;width:7px;height:1px;background:#1b9ad8;"></div><div class="a" style="left:676px;top:562px;width:7px;height:1px;background:#1b9ad8;"></div><div class="a" style="left:688px;top:562px;width:8px;height:1px;background:#1b9ad8;"></div><div class="a" style="left:701px;top:562px;width:7px;height:1px;background:#1b9ad8;"></div><div class="a" style="left:713px;top:562px;width:7px;height:1px;background:#1b9ad8;"></div><div class="a" style="left:725px;top:562px;width:8px;height:1px;background:#1b9ad8;"></div><div class="a" style="left:738px;top:562px;width:7px;height:1px;background:#1b9ad8;"></div><div class="a" style="left:750px;top:562px;width:7px;height:1px;background:#1b9ad8;"></div><div class="a" style="left:762px;top:562px;width:8px;height:1px;background:#1b9ad8;"></div>
<span class="t" style="left:791.0px;top:481px;font-size:29.5px;line-height:33px;height:33px;color:#3a3a3a;letter-spacing:-1.914px;">32</span>
<span class="t" style="left:790.2px;top:519px;font-size:11px;line-height:12px;height:12px;color:#8e8e9a;letter-spacing:-0.133px;">Page Writes/sec</span>
<div class="a" style="left:795px;top:556px;width:7px;height:7px;background:#8a9a30;"></div><div class="a" style="left:808px;top:556px;width:7px;height:7px;background:#8a9a30;"></div><div class="a" style="left:820px;top:556px;width:7px;height:7px;background:#8a9a30;"></div><div class="a" style="left:832px;top:556px;width:8px;height:7px;background:#8a9a30;"></div><div class="a" style="left:845px;top:556px;width:7px;height:7px;background:#8a9a30;"></div><div class="a" style="left:857px;top:556px;width:7px;height:7px;background:#8a9a30;"></div><div class="a" style="left:869px;top:556px;width:8px;height:7px;background:#8a9a30;"></div><div class="a" style="left:882px;top:556px;width:7px;height:7px;background:#8a9a30;"></div><div class="a" style="left:894px;top:556px;width:7px;height:7px;background:#8a9a30;"></div><div class="a" style="left:906px;top:556px;width:8px;height:7px;background:#8a9a30;"></div>
<span class="t" style="left:935.1px;top:481px;font-size:29.5px;line-height:33px;height:33px;color:#3a3a3a;letter-spacing:-2.822px;">3</span>
<span class="t" style="left:934.2px;top:519px;font-size:11px;line-height:12px;height:12px;color:#8e8e9a;letter-spacing:-0.185px;">Page Faults/sec</span>
<div class="a" style="left:939px;top:556px;width:7px;height:7px;background:#f26522;"></div><div class="a" style="left:952px;top:556px;width:7px;height:7px;background:#f26522;"></div><div class="a" style="left:964px;top:557px;width:7px;height:6px;background:#f26522;"></div><div class="a" style="left:976px;top:557px;width:8px;height:6px;background:#f26522;"></div><div class="a" style="left:989px;top:557px;width:7px;height:6px;background:#f26522;"></div><div class="a" style="left:1001px;top:557px;width:7px;height:6px;background:#f26522;"></div><div class="a" style="left:1013px;top:557px;width:8px;height:6px;background:#f26522;"></div><div class="a" style="left:1026px;top:557px;width:7px;height:6px;background:#f26522;"></div><div class="a" style="left:1038px;top:557px;width:7px;height:6px;background:#f26522;"></div><div class="a" style="left:1050px;top:557px;width:8px;height:6px;background:#f26522;"></div>
<span class="t" style="left:647.5px;top:581px;font-size:29.5px;line-height:33px;height:33px;color:#3a3a3a;letter-spacing:-1.749px;">12286</span>
<span class="t" style="left:646.7px;top:619px;font-size:11px;line-height:12px;height:12px;color:#8e8e9a;letter-spacing:-0.270px;">Page Lookups/sec</span>
<div class="a" style="left:651px;top:659px;width:7px;height:4px;background:#f26522;"></div><div class="a" style="left:664px;top:660px;width:7px;height:3px;background:#f26522;"></div><div class="a" style="left:676px;top:660px;width:7px;height:3px;background:#f26522;"></div><div class="a" style="left:688px;top:660px;width:8px;height:3px;background:#f26522;"></div><div class="a" style="left:701px;top:660px;width:7px;height:3px;background:#f26522;"></div><div class="a" style="left:713px;top:660px;width:7px;height:3px;background:#f26522;"></div><div class="a" style="left:725px;top:660px;width:8px;height:3px;background:#f26522;"></div><div class="a" style="left:738px;top:660px;width:7px;height:3px;background:#f26522;"></div><div class="a" style="left:750px;top:656px;width:7px;height:7px;background:#f26522;"></div><div class="a" style="left:762px;top:656px;width:8px;height:7px;background:#f26522;"></div>
<span class="t" style="left:791.0px;top:581px;font-size:29.5px;line-height:33px;height:33px;color:#3a3a3a;letter-spacing:-2.922px;">0</span>
<span class="t" style="left:790.2px;top:619px;font-size:11px;line-height:12px;height:12px;color:#8e8e9a;letter-spacing:-0.262px;">Page Splits/sec</span>
<div class="a" style="left:795px;top:662px;width:7px;height:1px;background:#1b9ad8;"></div><div class="a" style="left:808px;top:662px;width:7px;height:1px;background:#1b9ad8;"></div><div class="a" style="left:820px;top:662px;width:7px;height:1px;background:#1b9ad8;"></div><div class="a" style="left:832px;top:662px;width:8px;height:1px;background:#1b9ad8;"></div><div class="a" style="left:845px;top:662px;width:7px;height:1px;background:#1b9ad8;"></div><div class="a" style="left:857px;top:662px;width:7px;height:1px;background:#1b9ad8;"></div><div class="a" style="left:869px;top:662px;width:8px;height:1px;background:#1b9ad8;"></div><div class="a" style="left:882px;top:662px;width:7px;height:1px;background:#1b9ad8;"></div><div class="a" style="left:894px;top:662px;width:7px;height:1px;background:#1b9ad8;"></div><div class="a" style="left:906px;top:662px;width:8px;height:1px;background:#1b9ad8;"></div>
<span class="t" style="left:935.1px;top:581px;font-size:29.5px;line-height:33px;height:33px;color:#3a3a3a;letter-spacing:-1.792px;">728561</span>
<span class="t" style="left:934.2px;top:619px;font-size:11px;line-height:12px;height:12px;color:#8e8e9a;letter-spacing:-0.160px;">Page Life Expectancy</span>
<div class="a" style="left:939px;top:656px;width:7px;height:7px;background:#8a9a30;"></div><div class="a" style="left:952px;top:656px;width:7px;height:7px;background:#8a9a30;"></div><div class="a" style="left:964px;top:656px;width:7px;height:7px;background:#8a9a30;"></div><div class="a" style="left:976px;top:656px;width:8px;height:7px;background:#8a9a30;"></div><div class="a" style="left:989px;top:656px;width:7px;height:7px;background:#8a9a30;"></div><div class="a" style="left:1001px;top:656px;width:7px;height:7px;background:#8a9a30;"></div><div class="a" style="left:1013px;top:656px;width:8px;height:7px;background:#8a9a30;"></div><div class="a" style="left:1026px;top:656px;width:7px;height:7px;background:#8a9a30;"></div><div class="a" style="left:1038px;top:656px;width:7px;height:7px;background:#8a9a30;"></div><div class="a" style="left:1050px;top:656px;width:8px;height:7px;background:#8a9a30;"></div>
<span class="t" style="left:647.5px;top:681px;font-size:29.5px;line-height:33px;height:33px;color:#3a3a3a;letter-spacing:-1.963px;">N/A</span>
<span class="t" style="left:646.7px;top:719px;font-size:11px;line-height:12px;height:12px;color:#8e8e9a;letter-spacing:-0.103px;">Read Latency, ms</span>
<div class="a" style="left:651px;top:765px;width:7px;height:1px;background:#8a9a30;"></div><div class="a" style="left:664px;top:765px;width:7px;height:1px;background:#8a9a30;"></div><div class="a" style="left:676px;top:765px;width:7px;height:1px;background:#8a9a30;"></div><div class="a" style="left:688px;top:765px;width:8px;height:1px;background:#8a9a30;"></div><div class="a" style="left:701px;top:765px;width:7px;height:1px;background:#8a9a30;"></div><div class="a" style="left:713px;top:765px;width:7px;height:1px;background:#8a9a30;"></div><div class="a" style="left:725px;top:765px;width:8px;height:1px;background:#8a9a30;"></div><div class="a" style="left:738px;top:765px;width:7px;height:1px;background:#8a9a30;"></div><div class="a" style="left:750px;top:765px;width:7px;height:1px;background:#8a9a30;"></div><div class="a" style="left:762px;top:765px;width:8px;height:1px;background:#8a9a30;"></div>
<span class="t" style="left:791.0px;top:681px;font-size:29.5px;line-height:33px;height:33px;color:#3a3a3a;letter-spacing:-1.963px;">N/A</span>
<span class="t" style="left:790.2px;top:719px;font-size:11px;line-height:12px;height:12px;color:#8e8e9a;">Write Latency, ms</span>
<div class="a" style="left:795px;top:765px;width:7px;height:1px;background:#f26522;"></div><div class="a" style="left:808px;top:765px;width:7px;height:1px;background:#f26522;"></div><div class="a" style="left:820px;top:765px;width:7px;height:1px;background:#f26522;"></div><div class="a" style="left:832px;top:765px;width:8px;height:1px;background:#f26522;"></div><div class="a" style="left:845px;top:765px;width:7px;height:1px;background:#f26522;"></div><div class="a" style="left:857px;top:765px;width:7px;height:1px;background:#f26522;"></div><div class="a" style="left:869px;top:765px;width:8px;height:1px;background:#f26522;"></div><div class="a" style="left:882px;top:765px;width:7px;height:1px;background:#f26522;"></div><div class="a" style="left:894px;top:765px;width:7px;height:1px;background:#f26522;"></div><div class="a" style="left:906px;top:765px;width:8px;height:1px;background:#f26522;"></div>
<span class="t" style="left:935.1px;top:681px;font-size:29.5px;line-height:33px;height:33px;color:#3a3a3a;letter-spacing:-1.963px;">N/A</span>
<span class="t" style="left:934.2px;top:719px;font-size:11px;line-height:12px;height:12px;color:#8e8e9a;letter-spacing:-0.025px;">IO Latency, ms</span>
<div class="a" style="left:939px;top:765px;width:7px;height:1px;background:#1b9ad8;"></div><div class="a" style="left:952px;top:765px;width:7px;height:1px;background:#1b9ad8;"></div><div class="a" style="left:964px;top:765px;width:7px;height:1px;background:#1b9ad8;"></div><div class="a" style="left:976px;top:765px;width:8px;height:1px;background:#1b9ad8;"></div><div class="a" style="left:989px;top:765px;width:7px;height:1px;background:#1b9ad8;"></div><div class="a" style="left:1001px;top:765px;width:7px;height:1px;background:#1b9ad8;"></div><div class="a" style="left:1013px;top:765px;width:8px;height:1px;background:#1b9ad8;"></div><div class="a" style="left:1026px;top:765px;width:7px;height:1px;background:#1b9ad8;"></div><div class="a" style="left:1038px;top:765px;width:7px;height:1px;background:#1b9ad8;"></div><div class="a" style="left:1050px;top:765px;width:8px;height:1px;background:#1b9ad8;"></div>
<div class="a" style="left:0;top:0;width:1197px;height:774px;overflow:hidden"><div class="a" style="left:1070px;top:184px;width:1px;height:590px;background:#cccedb;"></div>
<div class="a" style="left:1071px;top:184px;width:126px;height:590px;background:#fff;"></div>
<div class="a" style="left:1071px;top:184px;width:126px;height:31px;background:#ececf2;"></div>
<span class="t" style="left:1074.0px;top:194px;font-size:11px;line-height:12px;height:12px;color:#1e1e1e;font-weight:700;letter-spacing:0.379px;">Host Properties</span>
<div class="a" style="left:1071px;top:215px;width:126px;height:1px;background:#cccedb;"></div>
<div class="a" style="left:1071px;top:216px;width:126px;height:20px;background:#fff;"></div>
<span class="t" style="left:1076.7px;top:220px;font-size:11px;line-height:12px;height:12px;color:#1e1e1e;letter-spacing:-0.109px;">Platform</span>
<div class="a" style="left:1071px;top:236px;width:126px;height:1px;background:#cccedb;"></div>
<div class="a" style="left:1071px;top:237px;width:126px;height:20px;background:#f4f4f4;"></div>
<span class="t" style="left:1076.7px;top:241px;font-size:11px;line-height:12px;height:12px;color:#1e1e1e;letter-spacing:-0.252px;">WindowsVersion</span>
<div class="a" style="left:1071px;top:257px;width:126px;height:1px;background:#cccedb;"></div>
<div class="a" style="left:1071px;top:258px;width:126px;height:20px;background:#fff;"></div>
<span class="t" style="left:1076.7px;top:262px;font-size:11px;line-height:12px;height:12px;color:#1e1e1e;letter-spacing:-0.170px;">ProcessorCount</span>
<div class="a" style="left:1071px;top:278px;width:126px;height:1px;background:#cccedb;"></div>
<div class="a" style="left:1071px;top:279px;width:126px;height:20px;background:#f4f4f4;"></div>
<span class="t" style="left:1076.7px;top:283px;font-size:11px;line-height:12px;height:12px;color:#1e1e1e;letter-spacing:-0.342px;">PhysicalMemory</span>
<div class="a" style="left:1071px;top:299px;width:126px;height:1px;background:#cccedb;"></div>
<div class="a" style="left:1071px;top:300px;width:126px;height:20px;background:#fff;"></div>
<span class="t" style="left:1076.7px;top:304px;font-size:11px;line-height:12px;height:12px;color:#1e1e1e;letter-spacing:0.042px;">host_platform</span>
<div class="a" style="left:1071px;top:320px;width:126px;height:1px;background:#cccedb;"></div>
<div class="a" style="left:1071px;top:321px;width:126px;height:20px;background:#f4f4f4;"></div>
<span class="t" style="left:1076.7px;top:325px;font-size:11px;line-height:12px;height:12px;color:#1e1e1e;letter-spacing:-0.033px;">host_os</span>
<div class="a" style="left:1071px;top:341px;width:126px;height:1px;background:#cccedb;"></div>
<div class="a" style="left:1071px;top:342px;width:126px;height:20px;background:#fff;"></div>
<span class="t" style="left:1076.7px;top:346px;font-size:11px;line-height:12px;height:12px;color:#1e1e1e;letter-spacing:-0.087px;">host_os_version</span>
<div class="a" style="left:1071px;top:362px;width:126px;height:1px;background:#cccedb;"></div>
<div class="a" style="left:1071px;top:363px;width:126px;height:20px;background:#f4f4f4;"></div>
<span class="t" style="left:1076.7px;top:367px;font-size:11px;line-height:12px;height:12px;color:#1e1e1e;letter-spacing:-0.124px;">host_service_pack_level</span>
<div class="a" style="left:1071px;top:383px;width:126px;height:1px;background:#cccedb;"></div>
<div class="a" style="left:1071px;top:384px;width:126px;height:20px;background:#fff;"></div>
<span class="t" style="left:1076.7px;top:388px;font-size:11px;line-height:12px;height:12px;color:#1e1e1e;letter-spacing:-0.120px;">host_os_language</span>
<div class="a" style="left:1071px;top:404px;width:126px;height:1px;background:#cccedb;"></div>
<div class="a" style="left:1071px;top:405px;width:126px;height:20px;background:#f4f4f4;"></div>
<span class="t" style="left:1076.7px;top:409px;font-size:11px;line-height:12px;height:12px;color:#1e1e1e;letter-spacing:-0.212px;">Virtual Memory</span>
<div class="a" style="left:1071px;top:425px;width:126px;height:1px;background:#cccedb;"></div>
<div class="a" style="left:1071px;top:426px;width:126px;height:31px;background:#f4f4f4;"></div>
<span class="t" style="left:1074.0px;top:436px;font-size:11px;line-height:12px;height:12px;color:#0a76d2;font-weight:700;letter-spacing:0.301px;">SQL Server Properties</span>
<div class="a" style="left:1071px;top:457px;width:126px;height:1px;background:#cccedb;"></div>
<div class="a" style="left:1071px;top:458px;width:126px;height:20px;background:#fff;"></div>
<span class="t" style="left:1076.7px;top:462px;font-size:11px;line-height:12px;height:12px;color:#1e1e1e;letter-spacing:-0.194px;">ProductVersion</span>
<div class="a" style="left:1071px;top:478px;width:126px;height:1px;background:#cccedb;"></div>
<div class="a" style="left:1071px;top:479px;width:126px;height:20px;background:#f4f4f4;"></div>
<span class="t" style="left:1076.7px;top:483px;font-size:11px;line-height:12px;height:12px;color:#1e1e1e;letter-spacing:-0.232px;">Language</span>
<div class="a" style="left:1071px;top:499px;width:126px;height:1px;background:#cccedb;"></div>
<div class="a" style="left:1071px;top:500px;width:126px;height:20px;background:#fff;"></div>
<span class="t" style="left:1076.7px;top:504px;font-size:11px;line-height:12px;height:12px;color:#1e1e1e;letter-spacing:-0.304px;">Engine Edition</span>
<div class="a" style="left:1071px;top:520px;width:126px;height:1px;background:#cccedb;"></div>
<div class="a" style="left:1071px;top:521px;width:126px;height:20px;background:#f4f4f4;"></div>
<span class="t" style="left:1076.7px;top:525px;font-size:11px;line-height:12px;height:12px;color:#1e1e1e;letter-spacing:-0.190px;">Product Level</span>
<div class="a" style="left:1071px;top:541px;width:126px;height:1px;background:#cccedb;"></div>
<div class="a" style="left:1071px;top:542px;width:126px;height:20px;background:#fff;"></div>
<span class="t" style="left:1076.7px;top:546px;font-size:11px;line-height:12px;height:12px;color:#1e1e1e;letter-spacing:-0.145px;">Product Update Level</span>
<div class="a" style="left:1071px;top:562px;width:126px;height:1px;background:#cccedb;"></div>
<div class="a" style="left:1071px;top:563px;width:126px;height:20px;background:#f4f4f4;"></div>
<span class="t" style="left:1076.7px;top:567px;font-size:11px;line-height:12px;height:12px;color:#1e1e1e;letter-spacing:-0.074px;">Product Update Refere...</span>
<div class="a" style="left:1071px;top:583px;width:126px;height:1px;background:#cccedb;"></div>
<div class="a" style="left:1071px;top:584px;width:126px;height:20px;background:#fff;"></div>
<span class="t" style="left:1076.7px;top:588px;font-size:11px;line-height:12px;height:12px;color:#1e1e1e;letter-spacing:-0.189px;">Resource Last Updated</span>
<div class="a" style="left:1071px;top:604px;width:126px;height:1px;background:#cccedb;"></div>
<div class="a" style="left:1071px;top:605px;width:126px;height:20px;background:#f4f4f4;"></div>
<span class="t" style="left:1076.7px;top:609px;font-size:11px;line-height:12px;height:12px;color:#1e1e1e;letter-spacing:-0.246px;">Resource Version</span>
<div class="a" style="left:1071px;top:625px;width:126px;height:1px;background:#cccedb;"></div>
<div class="a" style="left:1071px;top:626px;width:126px;height:20px;background:#fff;"></div>
<span class="t" style="left:1076.7px;top:630px;font-size:11px;line-height:12px;height:12px;color:#1e1e1e;letter-spacing:-0.235px;">Collation</span>
<div class="a" style="left:1071px;top:646px;width:126px;height:1px;background:#cccedb;"></div>
<div class="a" style="left:1071px;top:647px;width:126px;height:20px;background:#f4f4f4;"></div>
<span class="t" style="left:1076.7px;top:651px;font-size:11px;line-height:12px;height:12px;color:#1e1e1e;letter-spacing:-0.246px;">Comparison Style</span>
<div class="a" style="left:1071px;top:667px;width:126px;height:1px;background:#cccedb;"></div>
<div class="a" style="left:1071px;top:668px;width:126px;height:20px;background:#fff;"></div>
<span class="t" style="left:1076.7px;top:672px;font-size:11px;line-height:12px;height:12px;color:#1e1e1e;letter-spacing:-0.417px;">Build CLR Version</span>
<div class="a" style="left:1071px;top:688px;width:126px;height:1px;background:#cccedb;"></div>
<div class="a" style="left:1071px;top:689px;width:126px;height:20px;background:#f4f4f4;"></div>
<span class="t" style="left:1076.7px;top:693px;font-size:11px;line-height:12px;height:12px;color:#1e1e1e;letter-spacing:-0.263px;">SQL Charset</span>
<div class="a" style="left:1071px;top:709px;width:126px;height:1px;background:#cccedb;"></div>
<div class="a" style="left:1071px;top:710px;width:126px;height:20px;background:#fff;"></div>
<span class="t" style="left:1076.7px;top:714px;font-size:11px;line-height:12px;height:12px;color:#1e1e1e;letter-spacing:-0.237px;">SQL Sort Order</span>
<div class="a" style="left:1071px;top:730px;width:126px;height:1px;background:#cccedb;"></div>
<div class="a" style="left:1071px;top:731px;width:126px;height:20px;background:#f4f4f4;"></div>
<span class="t" style="left:1076.7px;top:735px;font-size:11px;line-height:12px;height:12px;color:#1e1e1e;letter-spacing:-0.194px;">Resource Governor</span>
<div class="a" style="left:1071px;top:751px;width:126px;height:1px;background:#cccedb;"></div>
<div class="a" style="left:1071px;top:752px;width:126px;height:20px;background:#fff;"></div>
<span class="t" style="left:1076.7px;top:756px;font-size:11px;line-height:12px;height:12px;color:#1e1e1e;letter-spacing:-0.066px;">Advanced Analytics</span>
<div class="a" style="left:1071px;top:772px;width:126px;height:1px;background:#cccedb;"></div></div>
<div class="a" style="left:0px;top:822px;width:1200px;height:28px;background:#f3f3f4;"></div>
<svg class="a" style="left:17px;top:804px" width="14" height="14" viewBox="0 0 14 14"><path d="M8 0.600H0.600v12.800H8" stroke="#2a2a2a" stroke-width="1.200" fill="none"/><path d="M3.500 7h8" stroke="#2a2a2a" stroke-width="1.800"/><path d="M8.500 3.500L12.500 7l-4 3.500" stroke="#2a2a2a" stroke-width="1.800" fill="none"/></svg>
<span class="t" style="left:33.2px;top:805px;font-size:11px;line-height:12px;height:12px;color:#1e1e1e;letter-spacing:0.161px;">Output</span>
<span class="t" style="left:15.2px;top:830px;font-size:11px;line-height:12px;height:12px;color:#1e1e1e;letter-spacing:0.101px;">Generating data... (0 of 0)</span>
<div class="a" style="left:1195px;top:838px;width:2px;height:2px;background:#c0c0c6;"></div><div class="a" style="left:1191px;top:842px;width:2px;height:2px;background:#c0c0c6;"></div><div class="a" style="left:1195px;top:842px;width:2px;height:2px;background:#c0c0c6;"></div><div class="a" style="left:1187px;top:846px;width:2px;height:2px;background:#c0c0c6;"></div><div class="a" style="left:1191px;top:846px;width:2px;height:2px;background:#c0c0c6;"></div><div class="a" style="left:1195px;top:846px;width:2px;height:2px;background:#c0c0c6;"></div>
</body></html>
